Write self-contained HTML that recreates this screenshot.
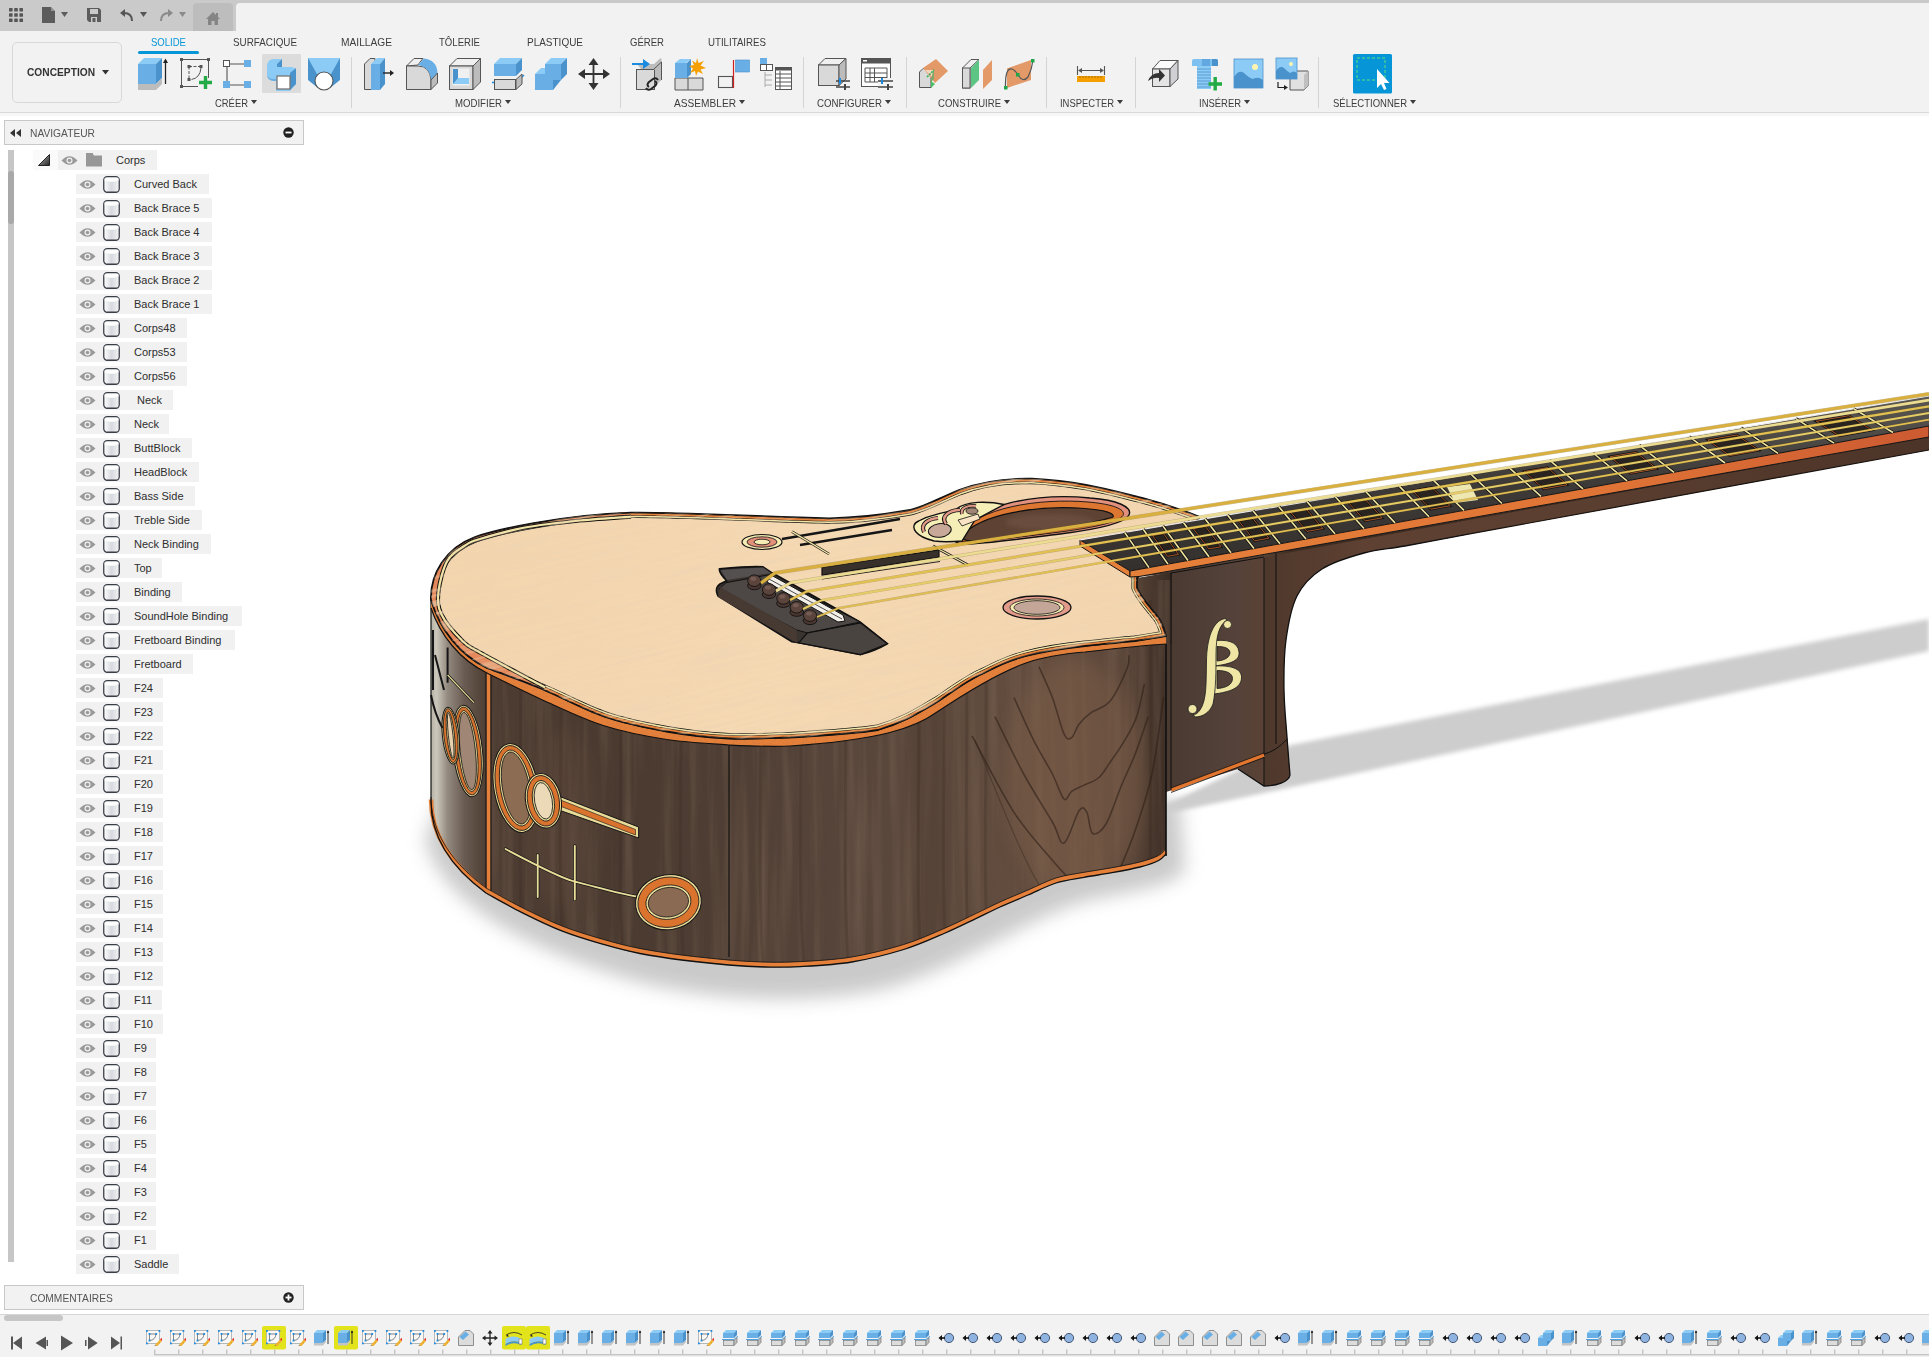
<!DOCTYPE html>
<html><head><meta charset="utf-8">
<style>
*{box-sizing:border-box}
html,body{margin:0;padding:0;width:1929px;height:1357px;overflow:hidden;background:#fff;font-family:"Liberation Sans",sans-serif;color:#333}
.abs{position:absolute}
#appbar{position:absolute;left:0;top:0;width:1929px;height:31px;background:#cacaca}
#hometab{position:absolute;left:193px;top:3px;width:40px;height:28px;background:#bdbdbd;border-radius:4px 4px 0 0}
#doctab{position:absolute;left:236px;top:3px;width:1693px;height:28px;background:#f2f2f2;border-radius:4px 0 0 0}
#toolbar{position:absolute;left:0;top:31px;width:1929px;height:82px;background:#f2f2f2;border-bottom:1px solid #d9d9d9}
#tbshade{position:absolute;left:0;top:113px;width:1929px;height:3px;background:#f6f6f6}
.tab{position:absolute;top:36px;font-size:11px;color:#3c3c3c;transform-origin:0 0;white-space:nowrap;letter-spacing:0}
.lbl{position:absolute;top:97px;font-size:11px;color:#3c3c3c;transform-origin:0 0;white-space:nowrap}
.sep{position:absolute;top:57px;width:1px;height:51px;background:#d4d4d4}
.arr{display:inline-block;width:0;height:0;border-left:3px solid transparent;border-right:3px solid transparent;border-top:4px solid #3c3c3c;vertical-align:2px;margin-left:3px}
#concept{position:absolute;left:12px;top:42px;width:110px;height:61px;border:1px solid #d8d8d8;border-radius:5px;background:#f2f2f2}
.panelhdr{position:absolute;left:4px;width:300px;height:25px;background:#f2f2f2;border:1px solid #c8c8c8}
.panelhdr span{position:absolute;left:25px;top:6px;font-size:11px;color:#555;transform-origin:0 0;transform:scaleX(0.93)}
.row{position:absolute;left:76px;height:20px}
.rbg{display:inline-block;height:20px;background:#f1f1f1;padding-right:11px;white-space:nowrap;position:relative}
.rbg .eye{position:absolute;left:3px;top:5px}
.rbg .bd{position:absolute;left:27px;top:2px}
.rt{display:inline-block;margin-left:58px;font-size:11px;line-height:20px;color:#2e2e2e}
#scroll{position:absolute;left:8px;top:150px;width:6px;height:1112px;background:#c6c6c6}
#thumb{position:absolute;left:8px;top:171px;width:6px;height:53px;background:#a9a9a9;border-radius:3px}
#tl{position:absolute;left:0;top:1314px;width:1929px;height:43px;background:#f2f2f2;border-top:1px solid #d6d6d6}
</style></head><body>
<svg width="0" height="0" style="position:absolute"><defs><linearGradient id="bg1" x1="0" x2="1"><stop offset="0" stop-color="#fff"/><stop offset="0.5" stop-color="#d6d9de"/><stop offset="1" stop-color="#f4f4f4"/></linearGradient></defs></svg>
<div id="appbar"></div>
<div id="hometab"></div>
<div id="doctab"></div>
<div id="toolbar"></div>
<div id="tbshade"></div>
<svg class="abs" style="left:0;top:0" width="240" height="31" viewBox="0 0 240 31"><rect x="9.0" y="8.0" width="3.6" height="3.6" rx="0.6" fill="#555"/><rect x="9.0" y="13.2" width="3.6" height="3.6" rx="0.6" fill="#555"/><rect x="9.0" y="18.4" width="3.6" height="3.6" rx="0.6" fill="#555"/><rect x="14.2" y="8.0" width="3.6" height="3.6" rx="0.6" fill="#555"/><rect x="14.2" y="13.2" width="3.6" height="3.6" rx="0.6" fill="#555"/><rect x="14.2" y="18.4" width="3.6" height="3.6" rx="0.6" fill="#555"/><rect x="19.4" y="8.0" width="3.6" height="3.6" rx="0.6" fill="#555"/><rect x="19.4" y="13.2" width="3.6" height="3.6" rx="0.6" fill="#555"/><rect x="19.4" y="18.4" width="3.6" height="3.6" rx="0.6" fill="#555"/><path d="M42 7 H51 L55 11 V23 H42Z" fill="#5c5c5c"/><path d="M51 7 V11 H55" fill="#cacaca" opacity="0.5"/><path d="M61 12 H68 L64.5 17Z" fill="#5c5c5c"/><path d="M87 8 H99 L101 10 V22 H89 L87 20Z" fill="#5c5c5c"/><rect x="90" y="9" width="8" height="5" fill="#cacaca"/><rect x="91" y="17" width="6" height="5" fill="#cacaca"/><rect x="92.5" y="18" width="3" height="4" fill="#5c5c5c"/><path d="M132 21 Q132 13 124 13 H122" stroke="#555" stroke-width="2" fill="none"/><path d="M120 13 L125 9 V17Z" fill="#555"/><path d="M140 12 H147 L143.5 17Z" fill="#555"/><path d="M161 21 Q161 13 169 13 H171" stroke="#8a8a8a" stroke-width="2" fill="none"/><path d="M173 13 L168 9 V17Z" fill="#8a8a8a"/><path d="M179 12 H186 L182.5 17Z" fill="#8a8a8a"/><path d="M206 19 L213 12 L220 19 H218 V25 H208 V19Z" fill="#858585"/><rect x="216" y="13" width="2" height="4" fill="#858585"/><rect x="211.5" y="21" width="3" height="4" fill="#bdbdbd"/></svg>
<div id="concept"></div>
<div class="abs" style="left:27px;top:65px;font-size:11.6px;font-weight:bold;color:#333;transform-origin:0 0;transform:scaleX(0.88);white-space:nowrap">CONCEPTION</div>
<svg class="abs" style="left:102px;top:70px" width="7" height="5"><path d="M0 0H7L3.5 4.5Z" fill="#333"/></svg>
<div class="tab" style="left:151px;color:#0696d7;transform:scaleX(0.867)">SOLIDE</div>
<div class="tab" style="left:233px;color:#3c3c3c;transform:scaleX(0.895)">SURFACIQUE</div>
<div class="tab" style="left:341px;color:#3c3c3c;transform:scaleX(0.927)">MAILLAGE</div>
<div class="tab" style="left:439px;color:#3c3c3c;transform:scaleX(0.871)">TÔLERIE</div>
<div class="tab" style="left:527px;color:#3c3c3c;transform:scaleX(0.907)">PLASTIQUE</div>
<div class="tab" style="left:630px;color:#3c3c3c;transform:scaleX(0.869)">GÉRER</div>
<div class="tab" style="left:708px;color:#3c3c3c;transform:scaleX(0.881)">UTILITAIRES</div>
<div class="abs" style="left:138px;top:51px;width:61px;height:3px;background:#0696d7;border-radius:1.5px"></div>
<div class="lbl" style="left:215px;transform:scaleX(0.857)">CRÉER</div>
<svg class="abs" style="left:251px;top:100px" width="7" height="5"><path d="M0 0H6L3 4Z" fill="#3c3c3c"/></svg>
<div class="lbl" style="left:455px;transform:scaleX(0.874)">MODIFIER</div>
<svg class="abs" style="left:505px;top:100px" width="7" height="5"><path d="M0 0H6L3 4Z" fill="#3c3c3c"/></svg>
<div class="lbl" style="left:674px;transform:scaleX(0.922)">ASSEMBLER</div>
<svg class="abs" style="left:739px;top:100px" width="7" height="5"><path d="M0 0H6L3 4Z" fill="#3c3c3c"/></svg>
<div class="lbl" style="left:817px;transform:scaleX(0.879)">CONFIGURER</div>
<svg class="abs" style="left:885px;top:100px" width="7" height="5"><path d="M0 0H6L3 4Z" fill="#3c3c3c"/></svg>
<div class="lbl" style="left:938px;transform:scaleX(0.866)">CONSTRUIRE</div>
<svg class="abs" style="left:1004px;top:100px" width="7" height="5"><path d="M0 0H6L3 4Z" fill="#3c3c3c"/></svg>
<div class="lbl" style="left:1060px;transform:scaleX(0.858)">INSPECTER</div>
<svg class="abs" style="left:1117px;top:100px" width="7" height="5"><path d="M0 0H6L3 4Z" fill="#3c3c3c"/></svg>
<div class="lbl" style="left:1199px;transform:scaleX(0.859)">INSÉRER</div>
<svg class="abs" style="left:1244px;top:100px" width="7" height="5"><path d="M0 0H6L3 4Z" fill="#3c3c3c"/></svg>
<div class="lbl" style="left:1333px;transform:scaleX(0.865)">SÉLECTIONNER</div>
<svg class="abs" style="left:1410px;top:100px" width="7" height="5"><path d="M0 0H6L3 4Z" fill="#3c3c3c"/></svg>
<div class="sep" style="left:351px"></div>
<div class="sep" style="left:620px"></div>
<div class="sep" style="left:803px"></div>
<div class="sep" style="left:906px"></div>
<div class="sep" style="left:1046px"></div>
<div class="sep" style="left:1135px"></div>
<div class="sep" style="left:1318px"></div>
<svg class="abs" style="left:0;top:0" width="1929" height="112" viewBox="0 0 1929 112"><g transform="translate(138,58)"><path d="M0 6 L6 0 H24 L18 6Z" fill="#8ccbf5"/><rect x="0" y="6" width="18" height="20" fill="#69afe5"/><path d="M18 6 L24 0 V20 L18 26Z" fill="#4a92cc"/><path d="M0 26 H18 L24 20 V26 L18 32 H0Z" fill="#bcbcbc"/><path d="M27.5 26 V2" stroke="#222" stroke-width="1.3"/><path d="M25 5 L27.5 0.5 L30 5Z" fill="#222"/></g><g transform="translate(180,58)"><path d="M1.5 1.5 H28.5 V20 M1.5 1.5 V28.5 H18" stroke="#555" stroke-width="1" fill="none"/><rect x="0" y="0" width="3" height="3" fill="#555"/><rect x="27" y="0" width="3" height="3" fill="#555"/><rect x="0" y="27" width="3" height="3" fill="#555"/><path d="M9 8.5 H20 M9 8.5 V21" stroke="#555" stroke-width="1" fill="none" stroke-dasharray="3 1.5"/><path d="M11.5 21.5 Q20 20 21 10" stroke="#555" stroke-width="1" fill="none"/><rect x="7.5" y="7" width="3" height="3" fill="#555"/><rect x="19.5" y="7" width="3" height="3" fill="#555"/><rect x="7.5" y="20" width="3" height="3" fill="#555"/><path d="M19 24.5 H32 M25.5 18 V31" stroke="#22aa44" stroke-width="3.4"/></g><g transform="translate(223,60)"><path d="M4 4 H25 M4 4 V25 H25" stroke="#555" stroke-width="1.1" fill="none"/><rect x="0.5" y="0.5" width="6" height="6" fill="#fff" stroke="#555"/><rect x="21" y="0" width="7" height="7" fill="#69afe5"/><rect x="0" y="21" width="7" height="7" fill="#69afe5"/><rect x="21" y="21" width="7" height="7" fill="#69afe5"/></g><g transform="translate(262,54)"><rect x="0" y="0" width="39" height="39" fill="#dcdcdc" rx="1"/><path d="M5 13 Q5 5 12 5 H20 L15 10 V13 H29 Q34 13 34 18 V30 L28 37 H14 V27 H12 Q5 27 5 20Z" fill="#8ccbf5"/><path d="M20 5 V13 H15 V10Z" fill="#4a92cc"/><path d="M28 19 L34 14 V30 L28 36Z" fill="#4a92cc"/><path d="M5 19 Q5 25 12 25 H14 V27 H12 Q5 27 5 20Z" fill="#4a92cc" opacity="0.5"/><rect x="15" y="22" width="13" height="13" fill="#fff" stroke="#777" stroke-width="1.3"/></g><g transform="translate(308,58)"><path d="M0 0 H32 V22 L22 30 H10 L0 22Z" fill="#4a92cc"/><path d="M0 0 H32 L22 18 H10Z" fill="#8ccbf5"/><circle cx="16" cy="23" r="9" fill="#fff" stroke="#555" stroke-width="1.1"/></g><g transform="translate(364,58)"><path d="M0.5 31.5 V6 L6 0.5 H11 V31.5Z" fill="#d9d9d9" stroke="#555" stroke-width="1"/><path d="M7 6 L13 0 H21 L16 6Z" fill="#8ccbf5"/><rect x="7" y="6" width="9" height="26" fill="#69afe5"/><path d="M16 6 L21 0 V26 L16 32Z" fill="#4a92cc"/><path d="M19 15 H27" stroke="#222" stroke-width="1.4"/><path d="M26 12 L30 15 L26 18Z" fill="#222"/></g><g transform="translate(406,58)"><path d="M0.5 31.5 V8 L8 0.5 H17 Q13 5 12 7 L0.5 8" fill="#f0f0f0" stroke="#555" stroke-width="1"/><path d="M0.5 8 H12 Q24 8 25 22 V31.5 H0.5Z" fill="#d9d9d9" stroke="#555" stroke-width="1"/><path d="M12 7 L18 0.5 Q31 2 31.5 15 L25 22 Q24 9 12 7Z" fill="#69afe5"/><path d="M25 22 L31.5 15 V25 L25 31.5Z" fill="#bcbcbc" stroke="#555" stroke-width="1"/></g><g transform="translate(449,58)"><path d="M0.5 8 L8 0.5 H31.5 L24 8Z" fill="#f0f0f0" stroke="#555" stroke-width="1"/><rect x="0.5" y="8" width="23.5" height="23.5" fill="#d9d9d9" stroke="#555" stroke-width="1"/><path d="M24 8 L31.5 0.5 V24 L24 31.5Z" fill="#bcbcbc" stroke="#555" stroke-width="1"/><rect x="3.5" y="10.5" width="17" height="17" fill="#f0f0f0"/><path d="M4 11 H9 V20 H20 V26 H4Z" fill="#4a92cc"/><path d="M9 20 H20 V26 H4Z" fill="#8ccbf5"/></g><g transform="translate(492,58)"><path d="M2 6 L8 0 H30 L24 6Z" fill="#8ccbf5"/><rect x="2" y="6" width="22" height="12" fill="#69afe5"/><path d="M24 6 L30 0 V12 L24 18Z" fill="#4a92cc"/><path d="M0 24.5 H24 L32 17" stroke="#1a8ae0" stroke-width="1.4" fill="none"/><rect x="2.5" y="21.5" width="21" height="10" fill="#d9d9d9" stroke="#555" stroke-width="1"/><path d="M24 21.5 L30 16 V26 L24 31.5Z" fill="#bcbcbc" stroke="#555" stroke-width="1"/></g><g transform="translate(535,58)"><path d="M10 6 L16 0 H32 L26 6Z" fill="#8ccbf5"/><rect x="10" y="6" width="16" height="16" fill="#69afe5"/><path d="M26 6 L32 0 V16 L26 22Z" fill="#4a92cc"/><path d="M0 16 L6 10 H10 V16Z" fill="#8ccbf5"/><rect x="0" y="16" width="18" height="16" fill="#69afe5"/><path d="M18 22 H26 L18 32Z" fill="#4a92cc"/></g><g transform="translate(578,58)"><path d="M15.5 4 V28 M4 16 H28" stroke="#333" stroke-width="1.8"/><path d="M15.5 0 L20.5 7 H10.5Z M15.5 32 L20.5 25 H10.5Z M0 16 L7 11 V21Z M32 16 L25 11 V21Z" fill="#333"/></g><g transform="translate(632,58)"><path d="M5 6 H22 L28 0.5 H29.5 V22 L23 28" fill="#bcbcbc"/><rect x="4.5" y="11.5" width="18" height="20" fill="#d9d9d9" stroke="#555" stroke-width="1"/><path d="M22 11 L29.5 4 V22" stroke="#555" fill="#bcbcbc" stroke-width="1"/><path d="M0 5 H11 V1 L18 6 L11 11 V7 H0Z" fill="#1b8be0"/><path d="M17 29 Q14 27 17 24 L21 21 Q24 19 26 22 M23 23 Q26 25 23 28 L19 31 Q16 33 14 30" stroke="#222" stroke-width="2" fill="none"/></g><g transform="translate(675,58)"><path d="M0 20 H28 V32 H0Z" fill="#d9d9d9" stroke="#555" stroke-width="1"/><path d="M13 20 V32" stroke="#555"/><path d="M0 5 L5 1 H16 L11 5Z" fill="#8ccbf5"/><rect x="0" y="5" width="12" height="15" fill="#69afe5"/><path d="M12 5 L16 1 V16 L12 20Z" fill="#4a92cc"/><path d="M22 0 L23.5 5 L29 3 L25.5 7.5 L31 10 L25.5 11.5 L28 16 L23 13.5 L21 18 L20 13 L15 15 L18 10.5 L14 8 L19 7 L17 2.5 L21 5Z" fill="#f5a000"/></g><g transform="translate(718,58)"><rect x="0.5" y="18.5" width="14" height="11" fill="none" stroke="#555" stroke-width="1.1"/><path d="M15.5 2 V30" stroke="#d02020" stroke-width="1.2"/><rect x="17.5" y="2" width="14" height="12" fill="#69afe5" stroke="#4a92cc" stroke-width="0.6"/></g><g transform="translate(760,58)"><rect x="0" y="0" width="7" height="7" fill="#69afe5"/><rect x="0.5" y="6.5" width="6" height="6" fill="#fff" stroke="#555" stroke-width="1"/><rect x="6.5" y="6.5" width="6" height="6" fill="#fff" stroke="#555" stroke-width="1"/><path d="M5 14 V29 M5 17 H12 M5 22 H12 M5 27 H12" stroke="#aaa" stroke-width="1"/><rect x="15.5" y="9.5" width="16" height="22" fill="#fff" stroke="#555" stroke-width="1"/><rect x="15.5" y="9.5" width="16" height="3" fill="#555"/><path d="M16 16 H31 M16 20 H31 M16 24 H31 M16 28 H31 M20 13 V31" stroke="#555" stroke-width="1"/></g><g transform="translate(818,58)"><path d="M0.5 7 L7 0.5 H28 L21 7Z" fill="#f0f0f0" stroke="#555" stroke-width="1"/><rect x="0.5" y="7" width="20.5" height="20.5" fill="#d9d9d9" stroke="#555" stroke-width="1"/><path d="M21 7 L28 0.5 V21 L21 27.5Z" fill="#bcbcbc" stroke="#555" stroke-width="1"/><path d="M18 23 H32 M18 29 H32" stroke="#444" stroke-width="1.6"/><rect x="21" y="20" width="2" height="6" fill="#1a8ae0"/><rect x="26" y="26" width="2" height="6" fill="#444"/></g><g transform="translate(861,58)"><rect x="0.5" y="0.5" width="29" height="28" fill="#fff" stroke="#555" stroke-width="1"/><rect x="0.5" y="0.5" width="29" height="5" fill="#555"/><rect x="2" y="2" width="4" height="1.5" fill="#fff"/><path d="M4 10 H26 V24 H4Z M4 15 H26 M4 19.5 H26 M9 10 V24 M13.5 10 V24" stroke="#555" stroke-width="1" fill="none"/><rect x="17" y="20" width="15" height="12" fill="#f2f2f2"/><path d="M17 23 H32 M17 29 H32" stroke="#444" stroke-width="1.6"/><rect x="20" y="20" width="2" height="6" fill="#1a8ae0"/><rect x="26" y="26" width="2" height="6" fill="#444"/></g><g transform="translate(919,59)"><path d="M0.5 28.5 V13 L4 9.5 H12 V28.5Z" fill="#d9d9d9" stroke="#555" stroke-width="1"/><path d="M4 9 L17 0 L29 12 L16 24Z" fill="#e39a68"/><path d="M6 11 H15 V20Z" fill="#f5d5bd"/><path d="M15 9 V20 L11 24" fill="#7aa86a"/><path d="M8 18 L15 11" stroke="#2cb35a" stroke-width="1.6" stroke-dasharray="2 1"/><path d="M12 22 L16 25 L12 29Z" fill="#4bbf6a"/></g><g transform="translate(962,59)"><path d="M0.5 29 V9 L9 0.5 H17 L8 9 V29Z" fill="#f0f0f0" stroke="#555" stroke-width="1"/><rect x="0.5" y="9" width="7.5" height="20" fill="#d9d9d9" stroke="#555" stroke-width="1"/><path d="M9 9 L17 0.5 V21 L9 29Z" fill="#5dc583"/><path d="M21 11 L30 1 V21 L21 30Z" fill="#e39a68"/></g><g transform="translate(1004,59)"><path d="M3 9.5 L27 1 V21 L3 29Z" fill="#e39a68"/><path d="M1.5 29 Q1 8 8 10 Q11 11 14 16 Q19 24 24 18 Q28 10 29 1" stroke="#555" stroke-width="1.2" fill="none"/><rect x="0" y="27" width="3.5" height="3.5" fill="#1ea84a"/><rect x="12" y="14" width="3.5" height="3.5" fill="#1ea84a"/><rect x="27" y="0" width="3.5" height="3.5" fill="#1ea84a"/></g><g transform="translate(1077,66)"><path d="M0.5 0 V9 M27.5 0 V9 M2 4.5 H26" stroke="#555" stroke-width="1.1"/><path d="M1 4.5 L5 2 V7Z M27 4.5 L23 2 V7Z" fill="#555"/><rect x="0" y="10" width="28" height="6" fill="#f5a000"/><path d="M3 10 V12 M6 10 V12 M9 10 V12 M12 10 V12 M15 10 V12 M18 10 V12 M21 10 V12 M24 10 V12" stroke="#7a5000" stroke-width="0.6"/></g><g transform="translate(1148,60)"><path d="M4.5 9 L12 0.5 H30 L22 9Z" fill="#fafafa" stroke="#555" stroke-width="1"/><rect x="4.5" y="9" width="17.5" height="17.5" fill="#e4e4e4" stroke="#555" stroke-width="1"/><path d="M22 9 L30 0.5 V19 L22 26.5Z" fill="#cfcfd4" stroke="#555" stroke-width="1"/><path d="M0 21 Q3 13 11 13 V9 L17 15.5 L11 22 V18 Q5 17 0 21Z" fill="#333"/></g><g transform="translate(1192,59)"><path d="M0 2 Q0 0 2 0 H24 Q26 0 26 2 V7 H0Z" fill="#7ec0f0"/><path d="M10 0 H18 V7 H10Z" fill="#62a8e0"/><path d="M20 0 H24 Q26 0 26 2 V7 H20Z" fill="#4a92cc"/><rect x="5" y="7" width="14" height="23" fill="#8ccbf5"/><path d="M5 10 H19 M5 13 H19 M5 16 H19 M5 19 H19 M5 22 H19 M5 25 H19 M5 28 H19" stroke="#4a92cc" stroke-width="0.8"/><path d="M16.5 25 H30 M23.2 18 V31.5" stroke="#22aa44" stroke-width="3.4"/></g><g transform="translate(1234,59)"><rect x="0" y="0" width="29" height="29" fill="#8ccbf5" stroke="#4a92cc" stroke-width="0.8"/><path d="M0 29 V18 Q5 10 10 14 Q15 19 19 20 Q24 17 29 21 V29Z" fill="#4a92cc"/><circle cx="21" cy="8" r="3" fill="#fff5b0"/></g><g transform="translate(1276,58)"><path d="M14 17 L18 13 H32 V28 L28 32 H14Z" fill="#e0e0e0" stroke="#555" stroke-width="1"/><path d="M28 17 L32 13 V28 L28 32Z" fill="#c0c0c0"/><rect x="0" y="0" width="21" height="21" fill="#8ccbf5" stroke="#4a92cc" stroke-width="0.8"/><path d="M0 21 V13 Q4 7 8 10 Q12 14 14 15 Q18 12 21 15 V21Z" fill="#4a92cc"/><circle cx="15" cy="6" r="2" fill="#fff5b0"/><path d="M2 24 V29.5 H9" stroke="#222" stroke-width="1.2" fill="none"/><path d="M8 27 L12 29.5 L8 32Z" fill="#222"/></g><g transform="translate(1353,54)"><rect x="0" y="0" width="39" height="39.5" rx="1.5" fill="#0696d7"/><rect x="4" y="4" width="28" height="22" fill="none" stroke="#5fe07a" stroke-width="1" stroke-dasharray="3 2"/><path d="M24 15 V34 L28 30 L31 36 L33.5 35 L31 29 L36.5 29Z" fill="#fff"/></g></svg>
<svg class="abs" style="left:0;top:0" width="1929" height="1357" viewBox="0 0 1929 1357">
<defs>
<filter id="blur8" x="-20%" y="-20%" width="140%" height="140%"><feGaussianBlur stdDeviation="9"/></filter>
<filter id="blur3" x="-10%" y="-50%" width="120%" height="200%"><feGaussianBlur stdDeviation="2.2"/></filter>
<linearGradient id="sideG" x1="486" y1="0" x2="1170" y2="0" gradientUnits="userSpaceOnUse">
 <stop offset="0" stop-color="#4d3c32"/><stop offset="0.2" stop-color="#4a3a30"/><stop offset="0.35" stop-color="#4f3e34"/>
 <stop offset="0.5" stop-color="#56443a"/><stop offset="0.7" stop-color="#5f4b3e"/><stop offset="0.85" stop-color="#654e40"/><stop offset="0.95" stop-color="#574337"/><stop offset="1" stop-color="#3a2c24"/>
</linearGradient>
<linearGradient id="buttG" x1="431" y1="0" x2="486" y2="0" gradientUnits="userSpaceOnUse">
 <stop offset="0" stop-color="#b8b2a6"/><stop offset="0.1" stop-color="#cbc7bb"/><stop offset="0.3" stop-color="#948a80"/><stop offset="0.6" stop-color="#6a5c52"/><stop offset="1" stop-color="#4e3e34"/>
</linearGradient>
<linearGradient id="topG" x1="431" y1="480" x2="1160" y2="740" gradientUnits="userSpaceOnUse">
 <stop offset="0" stop-color="#f3d5ad"/><stop offset="0.5" stop-color="#f5d9b3"/><stop offset="1" stop-color="#f3d6af"/>
</linearGradient>
<linearGradient id="heelG" x1="1171" y1="0" x2="1290" y2="0" gradientUnits="userSpaceOnUse">
 <stop offset="0" stop-color="#4a3a31"/><stop offset="0.5" stop-color="#54423a"/><stop offset="0.8" stop-color="#5a4234"/><stop offset="1" stop-color="#3e2c22"/>
</linearGradient>
<linearGradient id="bindG" x1="1130" y1="0" x2="1929" y2="0" gradientUnits="userSpaceOnUse"><stop offset="0" stop-color="#e5803a"/><stop offset="0.6" stop-color="#e07436"/><stop offset="1" stop-color="#cc5a32"/></linearGradient>
<linearGradient id="fbG" x1="0" y1="0" x2="0" y2="1">
 <stop offset="0" stop-color="#5a5652"/><stop offset="0.5" stop-color="#3e3a37"/><stop offset="1" stop-color="#34302d"/>
</linearGradient>
</defs>
<path d="M425 840 C440 900 520 950 650 985 C720 1000 800 1005 880 990 C960 970 1030 915 1090 900 C1140 890 1175 885 1185 870 L1180 800 L440 800Z" fill="#c8c8c8" filter="url(#blur8)" opacity="0.95"/>
<path d="M1150 812 L1291 745 L1929 619 L1929 651 L1170 813Z" fill="#cdcdcd" filter="url(#blur3)"/>
<path d="M1139 576.5 L1929 437 L1929 450 L1467 534.4 C1456.7 536.3 1422.2 542.9 1405.0 546.0 C1387.8 549.1 1377.8 549.2 1364.0 553.0 C1350.2 556.8 1333.2 561.8 1322.0 569.0 C1310.8 576.2 1303.0 584.2 1297.0 596.0 C1291.0 607.8 1288.2 624.3 1286.0 640.0 C1283.8 655.7 1283.8 673.8 1284.0 690.0 C1284.2 706.2 1286.0 722.8 1287.0 737.0 C1288.0 751.2 1289.5 768.7 1290.0 775.0 C1289 782 1276 786 1264 786 L1238 769 L1166 792 L1166 574Z" fill="url(#heelG)"/>
<linearGradient id="neckG" x1="1264" y1="0" x2="1929" y2="0" gradientUnits="userSpaceOnUse"><stop offset="0" stop-color="#4e382c"/><stop offset="0.15" stop-color="#5e4132"/><stop offset="0.5" stop-color="#5a3e30"/><stop offset="1" stop-color="#4c3428"/></linearGradient>
<path d="M1264 557 L1929 437 L1929 450 L1467 534.4 C1456.7 536.3 1422.2 542.9 1405.0 546.0 C1387.8 549.1 1377.8 549.2 1364.0 553.0 C1350.2 556.8 1333.2 561.8 1322.0 569.0 C1310.8 576.2 1303.0 584.2 1297.0 596.0 C1291.0 607.8 1288.2 624.3 1286.0 640.0 C1283.8 655.7 1283.8 673.8 1284.0 690.0 C1284.2 706.2 1286.0 722.8 1287.0 737.0 C1288.0 751.2 1289.5 768.7 1290.0 775.0 C1289 782 1276 786 1264 786Z" fill="url(#neckG)"/>
<path d="M1467 534.4 L1929 450" stroke="#1a1410" stroke-width="1.2" fill="none"/>
<path d="M1467 534.4 C1456.7 536.3 1422.2 542.9 1405.0 546.0 C1387.8 549.1 1377.8 549.2 1364.0 553.0 C1350.2 556.8 1333.2 561.8 1322.0 569.0 C1310.8 576.2 1303.0 584.2 1297.0 596.0 C1291.0 607.8 1288.2 624.3 1286.0 640.0 C1283.8 655.7 1283.8 673.8 1284.0 690.0 C1284.2 706.2 1286.0 722.8 1287.0 737.0 C1288.0 751.2 1289.5 768.7 1290.0 775.0 C1289 782 1276 786 1264 786 L1238 769" stroke="#111" stroke-width="1.3" fill="none"/>
<path d="M1264 558 L1264 786 M1276 553 V744 M1264 754 C1272 752 1280 747 1287 739" stroke="#111" stroke-width="1" fill="none"/>
<path d="M1171 790 L1264 755" stroke="#e2762e" stroke-width="4" fill="none"/><path d="M1171 792.5 L1264 757.5 M1171 788 L1264 753" stroke="#111" stroke-width="0.8" fill="none"/>
<path d="M431 600 L431 802 C431 830 444 862 486 893 C491.9 896.2 508.7 905.9 521.5 912.3 C534.3 918.7 549.2 926.0 563.0 931.4 C576.8 936.8 591.6 941.0 604.4 944.7 C617.2 948.4 627.1 951.0 640.0 953.5 C652.9 956.0 666.7 958.1 681.5 960.0 C696.3 961.9 715.0 963.8 728.7 965.0 C742.5 966.2 752.1 966.7 764.0 967.0 C775.9 967.3 785.4 967.4 800.0 966.6 C814.6 965.8 834.5 964.9 851.8 962.0 C869.1 959.1 888.1 954.3 903.7 949.5 C919.3 944.7 933.1 938.2 945.2 933.0 C957.3 927.8 967.2 922.7 976.3 918.4 C985.4 914.1 991.4 910.9 1000.0 907.0 C1008.6 903.1 1018.7 899.0 1028.0 895.0 C1037.3 891.0 1046.7 886.0 1056.0 883.0 C1065.3 880.0 1074.7 879.0 1084.0 877.3 C1093.3 875.6 1102.7 874.4 1112.0 872.7 C1121.3 871.0 1132.2 869.0 1140.0 867.0 C1147.8 865.0 1154.3 862.7 1158.6 860.5 C1162.9 858.3 1164.8 855.1 1166.0 854.0 L1166 644 L1172 644 L1172 572 L1137 578 L1200 517 C1170 505 1150 500 1141 497.6 C1110 490 1080 481 1032 478.7 C1000 478 975 484 959 490 C935 500 920 509 907 510.5 C870 517 850 518 829.6 518.3 C740 516 680 512 631 512.6 C560 515 495 530 475 537 C445 548 430 575 431 600 Z" fill="url(#sideG)"/>
<clipPath id="sideclip"><path d="M431 600 L431 802 C431 830 444 862 486 893 C491.9 896.2 508.7 905.9 521.5 912.3 C534.3 918.7 549.2 926.0 563.0 931.4 C576.8 936.8 591.6 941.0 604.4 944.7 C617.2 948.4 627.1 951.0 640.0 953.5 C652.9 956.0 666.7 958.1 681.5 960.0 C696.3 961.9 715.0 963.8 728.7 965.0 C742.5 966.2 752.1 966.7 764.0 967.0 C775.9 967.3 785.4 967.4 800.0 966.6 C814.6 965.8 834.5 964.9 851.8 962.0 C869.1 959.1 888.1 954.3 903.7 949.5 C919.3 944.7 933.1 938.2 945.2 933.0 C957.3 927.8 967.2 922.7 976.3 918.4 C985.4 914.1 991.4 910.9 1000.0 907.0 C1008.6 903.1 1018.7 899.0 1028.0 895.0 C1037.3 891.0 1046.7 886.0 1056.0 883.0 C1065.3 880.0 1074.7 879.0 1084.0 877.3 C1093.3 875.6 1102.7 874.4 1112.0 872.7 C1121.3 871.0 1132.2 869.0 1140.0 867.0 C1147.8 865.0 1154.3 862.7 1158.6 860.5 C1162.9 858.3 1164.8 855.1 1166.0 854.0 L1166 644 L1172 644 L1172 572 L1137 578 L1200 517 C1170 505 1150 500 1141 497.6 C1110 490 1080 481 1032 478.7 C1000 478 975 484 959 490 C935 500 920 509 907 510.5 C870 517 850 518 829.6 518.3 C740 516 680 512 631 512.6 C560 515 495 530 475 537 C445 548 430 575 431 600 Z"/></clipPath>
<filter id="streakF" x="0" y="0" width="100%" height="100%"><feTurbulence type="fractalNoise" baseFrequency="0.09 0.004" numOctaves="3" seed="7"/><feColorMatrix type="matrix" values="0 0 0 0 0.20  0 0 0 0 0.13  0 0 0 0 0.09  -2.2 0 0 0 1.25"/></filter>
<g clip-path="url(#sideclip)"><rect x="425" y="580" width="750" height="400" filter="url(#streakF)" opacity="0.5"/><ellipse cx="1075" cy="780" rx="70" ry="120" fill="#80604a" opacity="0.45" filter="url(#blur8)"/><ellipse cx="560" cy="820" rx="40" ry="90" fill="#5e4a3e" opacity="0.4" filter="url(#blur8)"/><path d="M918 600 C921 760 915 860 921 965" stroke="#33241b" stroke-width="3" fill="none" opacity="0.25"/><path d="M943 600 C947 760 939 860 947 965" stroke="#33241b" stroke-width="3" fill="none" opacity="0.20"/><path d="M966 600 C969 760 963 860 969 965" stroke="#33241b" stroke-width="3" fill="none" opacity="0.25"/><path d="M985 600 C989 760 981 860 989 965" stroke="#33241b" stroke-width="3" fill="none" opacity="0.20"/><path d="M760 600 C763 760 757 860 763 965" stroke="#33241b" stroke-width="3" fill="none" opacity="0.20"/><path d="M800 600 C804 760 796 860 804 965" stroke="#33241b" stroke-width="3" fill="none" opacity="0.18"/><path d="M845 600 C848 760 842 860 848 965" stroke="#33241b" stroke-width="3" fill="none" opacity="0.20"/><path d="M620 600 C623 760 617 860 623 965" stroke="#33241b" stroke-width="3" fill="none" opacity="0.18"/><path d="M560 600 C564 760 556 860 564 965" stroke="#33241b" stroke-width="3" fill="none" opacity="0.20"/><path d="M520 600 C523 760 517 860 523 965" stroke="#33241b" stroke-width="3" fill="none" opacity="0.18"/><path d="M680 600 C684 760 676 860 684 965" stroke="#33241b" stroke-width="3" fill="none" opacity="0.18"/><path d="M1150 600 C1153 760 1147 860 1153 965" stroke="#33241b" stroke-width="3" fill="none" opacity="0.25"/><path d="M1039.0 666.8 C1041.2 671.9 1048.2 686.3 1052.4 697.5 C1056.6 708.7 1060.8 727.2 1064.0 733.9 C1067.2 740.6 1069.1 739.3 1071.6 737.7 C1074.1 736.1 1075.8 728.4 1079.0 724.3 C1082.2 720.1 1085.5 716.6 1090.7 712.8 C1095.9 709.0 1103.9 708.6 1109.9 701.3 C1116.0 693.9 1123.8 676.4 1127.0 668.7 C1130.2 661.0 1128.7 657.5 1129.0 655.3" stroke="#2e2018" stroke-width="1.6" fill="none" opacity="0.6"/><path d="M1014.0 697.5 C1017.2 704.5 1026.9 726.9 1033.3 739.6 C1039.7 752.4 1047.3 764.1 1052.4 774.0 C1057.5 783.9 1060.8 796.1 1064.0 799.0 C1067.2 801.9 1068.4 793.5 1071.6 791.3 C1074.8 789.1 1078.5 787.8 1083.0 785.6 C1087.5 783.4 1093.9 781.8 1098.4 778.0 C1102.9 774.2 1105.4 769.0 1109.9 762.6 C1114.4 756.2 1120.7 747.3 1125.2 739.6 C1129.7 731.9 1133.5 725.9 1136.7 716.6 C1139.9 707.3 1143.1 689.4 1144.4 684.0" stroke="#2e2018" stroke-width="1.6" fill="none" opacity="0.6"/><path d="M995.0 716.6 C999.8 726.2 1014.1 756.4 1023.7 774.0 C1033.3 791.6 1045.7 810.5 1052.4 822.0 C1059.1 833.5 1059.5 844.9 1064.0 843.0 C1068.5 841.1 1075.4 815.6 1079.2 810.5 C1083.0 805.4 1084.7 808.6 1086.9 812.4 C1089.1 816.2 1089.4 831.6 1092.6 833.5 C1095.8 835.4 1101.2 832.0 1106.0 824.0 C1110.8 816.0 1116.6 797.1 1121.4 785.6 C1126.2 774.1 1130.3 766.5 1134.8 755.0 C1139.3 743.5 1146.0 723.0 1148.2 716.6" stroke="#2e2018" stroke-width="1.6" fill="none" opacity="0.6"/><path d="M972.0 735.8 C979.0 748.6 1000.6 791.6 1014.0 812.4 C1027.4 833.1 1042.8 848.8 1052.4 860.3 C1062.0 871.8 1068.4 877.9 1071.6 881.4" stroke="#2e2018" stroke-width="1.6" fill="none" opacity="0.6"/><path d="M1163.5 697.5 C1161.6 710.2 1156.8 751.6 1152.0 774.0 C1147.2 796.4 1140.2 815.6 1134.8 831.6 C1129.4 847.6 1122.0 863.6 1119.5 870.0" stroke="#2e2018" stroke-width="1.6" fill="none" opacity="0.6"/><path d="M975 740 C1000 800 1030 880 1050 900" stroke="#33241b" stroke-width="1.2" fill="none" opacity="0.4"/><rect x="912" y="650" width="34" height="320" fill="#3a2a20" opacity="0.18" filter="url(#blur8)"/></g>
<path d="M431 596 L431 802 C431 830 444 862 486 893 L486 668 C460 650 440 625 431 596Z" fill="url(#buttG)"/>
<ellipse cx="516" cy="788" rx="22" ry="45" fill="#e8dc98" stroke="#161616" stroke-width="1" transform="rotate(-10 516 788)"/><ellipse cx="516" cy="788" rx="20.0" ry="43.0" fill="#d9732e" stroke="#161616" stroke-width="0.8" transform="rotate(-10 516 788)"/><ellipse cx="516" cy="788" rx="15.5" ry="38.5" fill="#e8dc98" stroke="#161616" stroke-width="0.8" transform="rotate(-10 516 788)"/><ellipse cx="516" cy="788" rx="13.5" ry="36.5" fill="#8c6c52" stroke="#161616" stroke-width="0.8" transform="rotate(-10 516 788)"/>
<path d="M556 795 L638.6 827 L638.6 838 L553 808Z" fill="#e8dc98" stroke="#161616" stroke-width="1"/><path d="M558 799 L635.5 829.5 L635.5 835 L556 804.5Z" fill="#d9732e" stroke="#161616" stroke-width="0.6"/>
<ellipse cx="543.4" cy="800.8" rx="17.8" ry="27.5" fill="#e8dc98" stroke="#161616" stroke-width="1" transform="rotate(-10 543.4 800.8)"/><ellipse cx="543.4" cy="800.8" rx="15.8" ry="25.5" fill="#d9732e" stroke="#161616" stroke-width="0.8" transform="rotate(-10 543.4 800.8)"/><ellipse cx="543.4" cy="800.8" rx="10.8" ry="20.5" fill="#e8dc98" stroke="#161616" stroke-width="0.8" transform="rotate(-10 543.4 800.8)"/><ellipse cx="543.4" cy="800.8" rx="8.8" ry="18.5" fill="#ecd9b8" stroke="#161616" stroke-width="0.8" transform="rotate(-10 543.4 800.8)"/>
<path d="M505.5 849 C530 862 560 878 575 881.7 C600 888 620 894 636 896.4 M537.7 855 V897 M574.8 846 V899.5" stroke="#161616" stroke-width="3.4" fill="none" stroke-linecap="round"/><path d="M505.5 849 C530 862 560 878 575 881.7 C600 888 620 894 636 896.4 M537.7 855 V897 M574.8 846 V899.5" stroke="#e8dc98" stroke-width="1.9" fill="none" stroke-linecap="round"/>
<ellipse cx="668.4" cy="902.2" rx="33" ry="27.5" fill="#e8dc98" stroke="#161616" stroke-width="1" transform="rotate(-8 668.4 902.2)"/><ellipse cx="668.4" cy="902.2" rx="30.6" ry="25.1" fill="#d9732e" stroke="#161616" stroke-width="0.8" transform="rotate(-8 668.4 902.2)"/><ellipse cx="668.4" cy="902.2" rx="22.6" ry="17.1" fill="#e8dc98" stroke="#161616" stroke-width="0.8" transform="rotate(-8 668.4 902.2)"/><ellipse cx="668.4" cy="902.2" rx="20.2" ry="14.7" fill="#8a6a52" stroke="#161616" stroke-width="0.8" transform="rotate(-8 668.4 902.2)"/>
<ellipse cx="467.8" cy="751" rx="14.7" ry="46" fill="#e8dc98" stroke="#161616" stroke-width="1" transform="rotate(-6 467.8 751)"/><ellipse cx="467.8" cy="751" rx="12.899999999999999" ry="44.2" fill="#d9732e" stroke="#161616" stroke-width="0.8" transform="rotate(-6 467.8 751)"/><ellipse cx="467.8" cy="751" rx="9.399999999999999" ry="40.7" fill="#e8dc98" stroke="#161616" stroke-width="0.8" transform="rotate(-6 467.8 751)"/><ellipse cx="467.8" cy="751" rx="7.6" ry="38.9" fill="#a08674" stroke="#161616" stroke-width="0.8" transform="rotate(-6 467.8 751)"/>
<ellipse cx="450.7" cy="735.6" rx="8.3" ry="28.6" fill="#e8dc98" stroke="#161616" stroke-width="1" transform="rotate(-6 450.7 735.6)"/><ellipse cx="450.7" cy="735.6" rx="6.800000000000001" ry="27.1" fill="#d9732e" stroke="#161616" stroke-width="0.8" transform="rotate(-6 450.7 735.6)"/><ellipse cx="450.7" cy="735.6" rx="3.8000000000000007" ry="24.1" fill="#e8dc98" stroke="#161616" stroke-width="0.8" transform="rotate(-6 450.7 735.6)"/><ellipse cx="450.7" cy="735.6" rx="2.3000000000000007" ry="22.6" fill="#e8d2b0" stroke="#161616" stroke-width="0.8" transform="rotate(-6 450.7 735.6)"/>
<path d="M433 630 V690 M435 655 L444 690 M447.6 647.6 V682.7 M431 695 C434 710 438 720 442.5 728" stroke="#161616" stroke-width="2" fill="none"/>
<path d="M447.6 675 L473.9 702.7" stroke="#161616" stroke-width="2.6" fill="none"/><path d="M447.6 675 L473.9 702.7" stroke="#e8dc98" stroke-width="1.2" fill="none"/>
<path d="M488.5 668 V893" stroke="#e5803a" stroke-width="4"/><path d="M486 668 V893 M491 670 V895" stroke="#111" stroke-width="1"/>
<path d="M729 745 V957" stroke="#111" stroke-width="1.2"/>
<path d="M431 802 C431 830 444 862 486 893 C491.9 896.2 508.7 905.9 521.5 912.3 C534.3 918.7 549.2 926.0 563.0 931.4 C576.8 936.8 591.6 941.0 604.4 944.7 C617.2 948.4 627.1 951.0 640.0 953.5 C652.9 956.0 666.7 958.1 681.5 960.0 C696.3 961.9 715.0 963.8 728.7 965.0 C742.5 966.2 752.1 966.7 764.0 967.0 C775.9 967.3 785.4 967.4 800.0 966.6 C814.6 965.8 834.5 964.9 851.8 962.0 C869.1 959.1 888.1 954.3 903.7 949.5 C919.3 944.7 933.1 938.2 945.2 933.0 C957.3 927.8 967.2 922.7 976.3 918.4 C985.4 914.1 991.4 910.9 1000.0 907.0 C1008.6 903.1 1018.7 899.0 1028.0 895.0 C1037.3 891.0 1046.7 886.0 1056.0 883.0 C1065.3 880.0 1074.7 879.0 1084.0 877.3 C1093.3 875.6 1102.7 874.4 1112.0 872.7 C1121.3 871.0 1132.2 869.0 1140.0 867.0 C1147.8 865.0 1154.3 862.7 1158.6 860.5 C1162.9 858.3 1164.8 855.1 1166.0 854.0" stroke="#e5803a" stroke-width="4.5" fill="none" transform="translate(0,-2.5)"/>
<path d="M431 802 C431 830 444 862 486 893 C491.9 896.2 508.7 905.9 521.5 912.3 C534.3 918.7 549.2 926.0 563.0 931.4 C576.8 936.8 591.6 941.0 604.4 944.7 C617.2 948.4 627.1 951.0 640.0 953.5 C652.9 956.0 666.7 958.1 681.5 960.0 C696.3 961.9 715.0 963.8 728.7 965.0 C742.5 966.2 752.1 966.7 764.0 967.0 C775.9 967.3 785.4 967.4 800.0 966.6 C814.6 965.8 834.5 964.9 851.8 962.0 C869.1 959.1 888.1 954.3 903.7 949.5 C919.3 944.7 933.1 938.2 945.2 933.0 C957.3 927.8 967.2 922.7 976.3 918.4 C985.4 914.1 991.4 910.9 1000.0 907.0 C1008.6 903.1 1018.7 899.0 1028.0 895.0 C1037.3 891.0 1046.7 886.0 1056.0 883.0 C1065.3 880.0 1074.7 879.0 1084.0 877.3 C1093.3 875.6 1102.7 874.4 1112.0 872.7 C1121.3 871.0 1132.2 869.0 1140.0 867.0 C1147.8 865.0 1154.3 862.7 1158.6 860.5 C1162.9 858.3 1164.8 855.1 1166.0 854.0" stroke="#111" stroke-width="1.3" fill="none"/>
<path d="M431 802 C431 830 444 862 486 893 C491.9 896.2 508.7 905.9 521.5 912.3 C534.3 918.7 549.2 926.0 563.0 931.4 C576.8 936.8 591.6 941.0 604.4 944.7 C617.2 948.4 627.1 951.0 640.0 953.5 C652.9 956.0 666.7 958.1 681.5 960.0 C696.3 961.9 715.0 963.8 728.7 965.0 C742.5 966.2 752.1 966.7 764.0 967.0 C775.9 967.3 785.4 967.4 800.0 966.6 C814.6 965.8 834.5 964.9 851.8 962.0 C869.1 959.1 888.1 954.3 903.7 949.5 C919.3 944.7 933.1 938.2 945.2 933.0 C957.3 927.8 967.2 922.7 976.3 918.4 C985.4 914.1 991.4 910.9 1000.0 907.0 C1008.6 903.1 1018.7 899.0 1028.0 895.0 C1037.3 891.0 1046.7 886.0 1056.0 883.0 C1065.3 880.0 1074.7 879.0 1084.0 877.3 C1093.3 875.6 1102.7 874.4 1112.0 872.7 C1121.3 871.0 1132.2 869.0 1140.0 867.0 C1147.8 865.0 1154.3 862.7 1158.6 860.5 C1162.9 858.3 1164.8 855.1 1166.0 854.0" stroke="#111" stroke-width="0.8" fill="none" transform="translate(0,-5)"/>
<path d="M431 596 L431 802 M1166 644 V856" stroke="#111" stroke-width="1.2" fill="none"/>
<path d="M431 598 C440 630 460 655 487 668 C496.2 671.5 522.5 680.9 542.0 689.0 C561.5 697.1 583.2 709.4 604.0 716.5 C624.8 723.6 645.8 727.8 666.6 731.5 C687.4 735.2 708.4 737.5 729.0 738.5 C749.6 739.5 779.8 737.7 790.0 737.5 C830 735 860 733 878 730 C905 722 920 712 937 702 C955 690 968 680 982 674 C998 666 1010 660 1026 656 C1045 651 1065 648 1085 646 C1105 644 1120 642 1135 641 C1150 639 1158 637 1166 636 L1166 644 C1150 645 1120 648 1085 652 C1060 654 1040 658 1026 663 C1000 672 970 690 937 712 C915 728 880 740 790 746 C770 747 750 746 729 745 C718.6 744.1 687.4 742.7 666.6 739.5 C645.8 736.3 624.8 732.4 604.0 725.8 C583.2 719.2 561.5 708.5 542.0 699.7 C522.5 690.9 496.2 677.5 487.0 673.0 C460 660 440 635 431 608 Z" fill="#e5803a"/>
<filter id="speckF" x="0" y="0" width="100%" height="100%"><feTurbulence type="fractalNoise" baseFrequency="0.9" numOctaves="1" seed="11"/><feColorMatrix type="matrix" values="0 0 0 0 0.5  0 0 0 0 0.18  0 0 0 0 0.06  0 -7 0 0 3.0"/></filter>
<clipPath id="bindclip"><path d="M431 598 C440 630 460 655 487 668 C496.2 671.5 522.5 680.9 542.0 689.0 C561.5 697.1 583.2 709.4 604.0 716.5 C624.8 723.6 645.8 727.8 666.6 731.5 C687.4 735.2 708.4 737.5 729.0 738.5 C749.6 739.5 779.8 737.7 790.0 737.5 C830 735 860 733 878 730 C905 722 920 712 937 702 C955 690 968 680 982 674 C998 666 1010 660 1026 656 C1045 651 1065 648 1085 646 C1105 644 1120 642 1135 641 C1150 639 1158 637 1166 636 L1166 644 C1150 645 1120 648 1085 652 C1060 654 1040 658 1026 663 C1000 672 970 690 937 712 C915 728 880 740 790 746 C770 747 750 746 729 745 C718.6 744.1 687.4 742.7 666.6 739.5 C645.8 736.3 624.8 732.4 604.0 725.8 C583.2 719.2 561.5 708.5 542.0 699.7 C522.5 690.9 496.2 677.5 487.0 673.0 C460 660 440 635 431 608 Z"/></clipPath>
<g clip-path="url(#bindclip)"><rect x="425" y="590" width="750" height="170" filter="url(#speckF)" opacity="0.55"/></g>
<path d="M431 598 C440 630 460 655 487 668 C496.2 671.5 522.5 680.9 542.0 689.0 C561.5 697.1 583.2 709.4 604.0 716.5 C624.8 723.6 645.8 727.8 666.6 731.5 C687.4 735.2 708.4 737.5 729.0 738.5 C749.6 739.5 779.8 737.7 790.0 737.5 C830 735 860 733 878 730 C905 722 920 712 937 702 C955 690 968 680 982 674 C998 666 1010 660 1026 656 C1045 651 1065 648 1085 646 C1105 644 1120 642 1135 641 C1150 639 1158 637 1166 636" stroke="#111" stroke-width="1.2" fill="none"/>
<path d="M1166 644 C1150 645 1120 648 1085 652 C1060 654 1040 658 1026 663 C1000 672 970 690 937 712 C915 728 880 740 790 746 C770 747 750 746 729 745 C718.6 744.1 687.4 742.7 666.6 739.5 C645.8 736.3 624.8 732.4 604.0 725.8 C583.2 719.2 561.5 708.5 542.0 699.7 C522.5 690.9 496.2 677.5 487.0 673.0 C460 660 440 635 431 608" stroke="#111" stroke-width="1.2" fill="none"/>
<path d="M431 600 C430 575 445 548 475 537 C495 530 560 515 631 512.6 C680 512 740 516 829.6 518.3 C850 518 870 517 907 510.5 C920 509 935 500 959 490 C975 484 1000 478 1032 478.7 C1080 481 1110 490 1141 497.6 C1150 500 1170 505 1200 517 L1137 578 L1137 588 C1142 600 1155 612 1160 620 C1163 626 1165 632 1166 636 C1158 637 1150 639 1135 641 C1120 642 1105 644 1085 646 C1065 648 1045 651 1026 656 C1010 660 998 666 982 674 C968 680 955 690 937 702 C920 712 905 722 878 730 C860 733 830 735 790 737.5 C779.8 737.7 749.6 739.5 729.0 738.5 C708.4 737.5 687.4 735.2 666.6 731.5 C645.8 727.8 624.8 723.6 604.0 716.5 C583.2 709.4 561.5 697.1 542.0 689.0 C522.5 680.9 496.2 671.5 487.0 668.0 C460 655 440 630 431 600Z" fill="url(#topG)"/>
<clipPath id="topclip2"><path d="M431 600 C430 575 445 548 475 537 C495 530 560 515 631 512.6 C680 512 740 516 829.6 518.3 C850 518 870 517 907 510.5 C920 509 935 500 959 490 C975 484 1000 478 1032 478.7 C1080 481 1110 490 1141 497.6 C1150 500 1170 505 1200 517 L1137 578 L1137 588 C1142 600 1155 612 1160 620 C1163 626 1165 632 1166 636 C1158 637 1150 639 1135 641 C1120 642 1105 644 1085 646 C1065 648 1045 651 1026 656 C1010 660 998 666 982 674 C968 680 955 690 937 702 C920 712 905 722 878 730 C860 733 830 735 790 737.5 C779.8 737.7 749.6 739.5 729.0 738.5 C708.4 737.5 687.4 735.2 666.6 731.5 C645.8 727.8 624.8 723.6 604.0 716.5 C583.2 709.4 561.5 697.1 542.0 689.0 C522.5 680.9 496.2 671.5 487.0 668.0 C460 655 440 630 431 600Z"/></clipPath>
<g clip-path="url(#topclip2)" fill="none"><path d="M431 600 C430 575 445 548 475 537 C495 530 560 515 631 512.6 C680 512 740 516 829.6 518.3 C850 518 870 517 907 510.5 C920 509 935 500 959 490 C975 484 1000 478 1032 478.7 C1080 481 1110 490 1141 497.6 C1150 500 1170 505 1200 517 L1137 578 L1137 588 C1142 600 1155 612 1160 620 C1163 626 1165 632 1166 636 C1158 637 1150 639 1135 641 C1120 642 1105 644 1085 646 C1065 648 1045 651 1026 656 C1010 660 998 666 982 674 C968 680 955 690 937 702 C920 712 905 722 878 730 C860 733 830 735 790 737.5 C779.8 737.7 749.6 739.5 729.0 738.5 C708.4 737.5 687.4 735.2 666.6 731.5 C645.8 727.8 624.8 723.6 604.0 716.5 C583.2 709.4 561.5 697.1 542.0 689.0 C522.5 680.9 496.2 671.5 487.0 668.0 C460 655 440 630 431 600Z" stroke="#111" stroke-width="11"/><path d="M431 600 C430 575 445 548 475 537 C495 530 560 515 631 512.6 C680 512 740 516 829.6 518.3 C850 518 870 517 907 510.5 C920 509 935 500 959 490 C975 484 1000 478 1032 478.7 C1080 481 1110 490 1141 497.6 C1150 500 1170 505 1200 517 L1137 578 L1137 588 C1142 600 1155 612 1160 620 C1163 626 1165 632 1166 636 C1158 637 1150 639 1135 641 C1120 642 1105 644 1085 646 C1065 648 1045 651 1026 656 C1010 660 998 666 982 674 C968 680 955 690 937 702 C920 712 905 722 878 730 C860 733 830 735 790 737.5 C779.8 737.7 749.6 739.5 729.0 738.5 C708.4 737.5 687.4 735.2 666.6 731.5 C645.8 727.8 624.8 723.6 604.0 716.5 C583.2 709.4 561.5 697.1 542.0 689.0 C522.5 680.9 496.2 671.5 487.0 668.0 C460 655 440 630 431 600Z" stroke="#f3e6a6" stroke-width="9.6"/><path d="M431 600 C430 575 445 548 475 537 C495 530 560 515 631 512.6 C680 512 740 516 829.6 518.3 C850 518 870 517 907 510.5 C920 509 935 500 959 490 C975 484 1000 478 1032 478.7 C1080 481 1110 490 1141 497.6 C1150 500 1170 505 1200 517 L1137 578 L1137 588 C1142 600 1155 612 1160 620 C1163 626 1165 632 1166 636 C1158 637 1150 639 1135 641 C1120 642 1105 644 1085 646 C1065 648 1045 651 1026 656 C1010 660 998 666 982 674 C968 680 955 690 937 702 C920 712 905 722 878 730 C860 733 830 735 790 737.5 C779.8 737.7 749.6 739.5 729.0 738.5 C708.4 737.5 687.4 735.2 666.6 731.5 C645.8 727.8 624.8 723.6 604.0 716.5 C583.2 709.4 561.5 697.1 542.0 689.0 C522.5 680.9 496.2 671.5 487.0 668.0 C460 655 440 630 431 600Z" stroke="#111" stroke-width="6.6"/><path d="M431 600 C430 575 445 548 475 537 C495 530 560 515 631 512.6 C680 512 740 516 829.6 518.3 C850 518 870 517 907 510.5 C920 509 935 500 959 490 C975 484 1000 478 1032 478.7 C1080 481 1110 490 1141 497.6 C1150 500 1170 505 1200 517 L1137 578 L1137 588 C1142 600 1155 612 1160 620 C1163 626 1165 632 1166 636 C1158 637 1150 639 1135 641 C1120 642 1105 644 1085 646 C1065 648 1045 651 1026 656 C1010 660 998 666 982 674 C968 680 955 690 937 702 C920 712 905 722 878 730 C860 733 830 735 790 737.5 C779.8 737.7 749.6 739.5 729.0 738.5 C708.4 737.5 687.4 735.2 666.6 731.5 C645.8 727.8 624.8 723.6 604.0 716.5 C583.2 709.4 561.5 697.1 542.0 689.0 C522.5 680.9 496.2 671.5 487.0 668.0 C460 655 440 630 431 600Z" stroke="#e5803a" stroke-width="5.6"/></g>
<path d="M545 691 C522 683 500 674 487 668 C460 655 440 630 431 600 C430 575 445 548 475 537 C495 530 560 515 631 512.6 L631 516.6 C622.5 517.2 597.7 518.7 580.0 520.5 C562.3 522.3 541.7 524.4 525.0 527.5 C508.3 530.6 490.0 536.0 480.0 539.0 C470.0 542.0 470.4 541.9 465.0 545.5 C459.6 549.1 451.9 552.8 447.5 560.5 C443.1 568.2 439.5 582.5 438.5 591.5 C437.5 600.5 437.5 606.2 441.5 614.5 C445.5 622.8 456.1 634.7 462.5 641.0 C468.9 647.3 466.2 644.8 480.0 652.5 C493.8 660.2 534.2 681.7 545.0 687.5 Z" fill="#e4875a"/>
<path d="M545 687.5 C534.2 681.7 493.8 660.2 480.0 652.5 C466.2 644.8 468.9 647.3 462.5 641.0 C456.1 634.7 445.5 622.8 441.5 614.5 C437.5 606.2 437.5 600.5 438.5 591.5 C439.5 582.5 443.1 568.2 447.5 560.5 C451.9 552.8 459.6 549.1 465.0 545.5 C470.4 541.9 470.0 542.0 480.0 539.0 C490.0 536.0 508.3 530.6 525.0 527.5 C541.7 524.4 562.3 522.3 580.0 520.5 C597.7 518.7 622.5 517.2 631.0 516.6" stroke="#111" stroke-width="4.2" fill="none"/><path d="M545 687.5 C534.2 681.7 493.8 660.2 480.0 652.5 C466.2 644.8 468.9 647.3 462.5 641.0 C456.1 634.7 445.5 622.8 441.5 614.5 C437.5 606.2 437.5 600.5 438.5 591.5 C439.5 582.5 443.1 568.2 447.5 560.5 C451.9 552.8 459.6 549.1 465.0 545.5 C470.4 541.9 470.0 542.0 480.0 539.0 C490.0 536.0 508.3 530.6 525.0 527.5 C541.7 524.4 562.3 522.3 580.0 520.5 C597.7 518.7 622.5 517.2 631.0 516.6" stroke="#f3e6a6" stroke-width="2.2" fill="none"/>
<path d="M431 600 C430 575 445 548 475 537 C495 530 560 515 631 512.6 C680 512 740 516 829.6 518.3 C850 518 870 517 907 510.5 C920 509 935 500 959 490 C975 484 1000 478 1032 478.7 C1080 481 1110 490 1141 497.6 C1150 500 1170 505 1200 517 L1137 578 L1137 588 C1142 600 1155 612 1160 620 C1163 626 1165 632 1166 636 C1158 637 1150 639 1135 641 C1120 642 1105 644 1085 646 C1065 648 1045 651 1026 656 C1010 660 998 666 982 674 C968 680 955 690 937 702 C920 712 905 722 878 730 C860 733 830 735 790 737.5 C779.8 737.7 749.6 739.5 729.0 738.5 C708.4 737.5 687.4 735.2 666.6 731.5 C645.8 727.8 624.8 723.6 604.0 716.5 C583.2 709.4 561.5 697.1 542.0 689.0 C522.5 680.9 496.2 671.5 487.0 668.0 C460 655 440 630 431 600Z" fill="none" stroke="#111" stroke-width="1.8"/>
<filter id="noiseF" x="0" y="0" width="100%" height="100%"><feTurbulence type="fractalNoise" baseFrequency="0.012 0.3" numOctaves="3" seed="3"/><feColorMatrix type="matrix" values="0 0 0 0 0.86  0 0 0 0 0.66  0 0 0 0 0.45  -3 0 0 0 1.75"/></filter>
<g clip-path="url(#topclip)"><rect x="380" y="330" width="850" height="520" filter="url(#noiseF)" opacity="0.6" transform="rotate(-14 800 600)"/></g>
<clipPath id="topclip"><path d="M431 600 C430 575 445 548 475 537 C495 530 560 515 631 512.6 C680 512 740 516 829.6 518.3 C850 518 870 517 907 510.5 C920 509 935 500 959 490 C975 484 1000 478 1032 478.7 C1080 481 1110 490 1141 497.6 C1150 500 1170 505 1200 517 L1137 578 L1137 588 C1142 600 1155 612 1160 620 C1163 626 1165 632 1166 636 C1158 637 1150 639 1135 641 C1120 642 1105 644 1085 646 C1065 648 1045 651 1026 656 C1010 660 998 666 982 674 C968 680 955 690 937 702 C920 712 905 722 878 730 C860 733 830 735 790 737.5 C779.8 737.7 749.6 739.5 729.0 738.5 C708.4 737.5 687.4 735.2 666.6 731.5 C645.8 727.8 624.8 723.6 604.0 716.5 C583.2 709.4 561.5 697.1 542.0 689.0 C522.5 680.9 496.2 671.5 487.0 668.0 C460 655 440 630 431 600Z"/></clipPath>
<path d="M954 537 C972 503 1040 493 1090 498 C1117 500 1133 507 1129 515 C1125 523 1100 529 1060 534 C1020 539 985 544 965 544 C957 544 952 541 954 537Z" fill="#e0907c" stroke="#111" stroke-width="1.4"/>
<path d="M958 536.5 C976 507 1040 498 1088 502 C1112 504 1126 509 1123 515.5 C1118 522 1098 527 1060 532 C1020 537 985 542 967 542 C960 542 956 539.5 958 536.5Z" fill="#dd7630" stroke="#111" stroke-width="0.9"/>
<path d="M962 536 C981 513 1040 505 1085 508.5 C1104 510 1115 513 1113 517 C1100 522 1060 528 1020 534 C1000 537 985 540 973 541 C966 541 960 539 962 536Z" fill="#5e4334" stroke="#111" stroke-width="1.2"/>
<ellipse cx="1050" cy="522" rx="45" ry="8" fill="#735444" opacity="0.55" filter="url(#blur3)"/>
<path d="M934.8 514.9 C945 512 952 511 956 509.3 C960 506 966 503 977.8 502.4 C988 502 995 502.5 1004 504.5 L975 520 L962 541 C950 542 942 542 934.2 541 C926 539 920 537 916 532 C912 527 914 523 918.7 521 C924 518 930 516 934.8 514.9Z" fill="#f5eeb6" stroke="#111" stroke-width="1.4"/>
<ellipse cx="939.8" cy="530.4" rx="11.5" ry="6.8" transform="rotate(-8 939.8 530.4)" fill="#c8a898" stroke="#111" stroke-width="1"/>
<path d="M924 532 C920 524 928 519 938 518" stroke="#111" stroke-width="4.2" fill="none"/><path d="M924 532 C920 524 928 519 938 518" stroke="#e29a88" stroke-width="2.4" fill="none"/>
<path d="M946 524 C940 516 950 510 960 510" stroke="#111" stroke-width="4.2" fill="none"/><path d="M946 524 C940 516 950 510 960 510" stroke="#e29a88" stroke-width="2.4" fill="none"/>
<path d="M962 514 C960 508 968 505 976 506" stroke="#111" stroke-width="3.6" fill="none"/><path d="M962 514 C960 508 968 505 976 506" stroke="#e29a88" stroke-width="2" fill="none"/>
<ellipse cx="972" cy="511" rx="6" ry="3.2" fill="#a08478" stroke="#111" stroke-width="0.8"/><path d="M958 520 L978 514 L980 519 L962 526Z" fill="#f8e4c4" stroke="#111" stroke-width="0.8"/>
<path d="M822 567.5 L939 550 L939 557 L822 575Z" fill="#38302a" stroke="#111" stroke-width="1.2"/><path d="M824 577 L940 559.5" stroke="#f5eeb6" stroke-width="2.2"/><path d="M822 579 L940 561.5" stroke="#111" stroke-width="0.9"/>
<path d="M782 539 L900 519 M800 545 L892 530" stroke="#151515" stroke-width="2.3" fill="none"/>
<path d="M792 531.6 L829 554 M933 546 L968 565" stroke="#151515" stroke-width="2.6" fill="none"/><path d="M792 531.6 L829 554 M933 546 L968 565" stroke="#f3e6a6" stroke-width="1.3" fill="none"/>
<ellipse cx="762" cy="542" rx="20" ry="7.5" fill="#f6ecb4" stroke="#111" stroke-width="1.2"/><ellipse cx="762" cy="542" rx="15" ry="5.2" fill="#e2907a" stroke="#111" stroke-width="0.8"/><ellipse cx="762" cy="542" rx="8" ry="2.8" fill="#f6ecb4" stroke="#111" stroke-width="0.8"/>
<ellipse cx="1037" cy="607.5" rx="34" ry="11.5" fill="#e29a8a" stroke="#111" stroke-width="1.3"/><ellipse cx="1037" cy="607.5" rx="27" ry="8.5" fill="#f6ecb4" stroke="#111" stroke-width="0.8"/><ellipse cx="1037" cy="607.5" rx="23" ry="6.8" fill="#c4a698" stroke="#111" stroke-width="0.8"/>
<path d="M719.4 568.9 C740 567 755 566 763.2 566.9 L772 572.8 L860 622 L887.3 643.7 C880 648 870 652 860.7 654.6 L798.7 642.8 L791.8 641.8 L717.9 596 C715 590 716 587 720 584 L726.7 580.7 C722 576 719 572 719.4 568.9Z" fill="#3a3430" stroke="#111" stroke-width="1.6"/>
<path d="M726 582.7 L769 574.8 L860 622 L807.5 632.9 L796.7 630 L719 589Z" fill="#4d4845" stroke="#111" stroke-width="1"/>
<path d="M720 587 L796.7 630 L797 643 L718 597Z" fill="#463a33"/>
<path d="M807.5 632.9 L860.7 623 L887.3 643.7 L860.7 654.6 L798.7 642.8Z" fill="#4a4440" stroke="#111" stroke-width="1.2"/>
<path d="M721 570 L763 567.5 L771 573 L727 580Z" fill="#555050"/>
<path d="M771 575 L843 615 L845 621 L838 622 L767 582Z" fill="#f3f0ea" stroke="#111" stroke-width="1"/><path d="M769 579 L842 619" stroke="#222" stroke-width="0.8"/>
<ellipse cx="754.3" cy="585.7" rx="6.8" ry="4" fill="#4a3630" stroke="#111" stroke-width="0.9"/><ellipse cx="754.3" cy="580.7" rx="6.6" ry="5.8" fill="#5a443c" stroke="#111" stroke-width="0.9"/><ellipse cx="753.3" cy="578.7" rx="3" ry="2" fill="#7a625a" opacity="0.8"/>
<ellipse cx="769.0" cy="594.5" rx="6.8" ry="4" fill="#4a3630" stroke="#111" stroke-width="0.9"/><ellipse cx="769.0" cy="589.5" rx="6.6" ry="5.8" fill="#5a443c" stroke="#111" stroke-width="0.9"/><ellipse cx="768.0" cy="587.5" rx="3" ry="2" fill="#7a625a" opacity="0.8"/>
<ellipse cx="783.4" cy="603.4" rx="6.8" ry="4" fill="#4a3630" stroke="#111" stroke-width="0.9"/><ellipse cx="783.4" cy="598.4" rx="6.6" ry="5.8" fill="#5a443c" stroke="#111" stroke-width="0.9"/><ellipse cx="782.4" cy="596.4" rx="3" ry="2" fill="#7a625a" opacity="0.8"/>
<ellipse cx="796.7" cy="612.3" rx="6.8" ry="4" fill="#4a3630" stroke="#111" stroke-width="0.9"/><ellipse cx="796.7" cy="607.3" rx="6.6" ry="5.8" fill="#5a443c" stroke="#111" stroke-width="0.9"/><ellipse cx="795.7" cy="605.3" rx="3" ry="2" fill="#7a625a" opacity="0.8"/>
<ellipse cx="810.0" cy="620.6" rx="6.8" ry="4" fill="#4a3630" stroke="#111" stroke-width="0.9"/><ellipse cx="810.0" cy="615.6" rx="6.6" ry="5.8" fill="#5a443c" stroke="#111" stroke-width="0.9"/><ellipse cx="809.0" cy="613.6" rx="3" ry="2" fill="#7a625a" opacity="0.8"/>
<path d="M1080 540 L1929 396 L1929 426 L1130 571Z" fill="url(#fbG)"/>
<path d="M1080 540 L1130 571 L1130 577 L1080 546Z" fill="#e5803a" stroke="#111" stroke-width="1"/>
<path d="M1130 571 L1929 426 L1929 437 L1139 576.5 L1130 577Z" fill="url(#bindG)" stroke="#111" stroke-width="1"/>
<path d="M1080 540 L1929 396" stroke="#eee" stroke-width="1.2" fill="none"/>
<path d="M1149.0 567.6 L1124.6 532.4 M1168.0 564.1 L1143.2 529.3 M1188.0 560.5 L1162.8 525.9 M1209.0 556.7 L1183.4 522.5 M1231.0 552.7 L1205.0 518.8 M1254.0 548.5 L1227.5 515.0 M1280.0 543.8 L1253.0 510.7 M1306.0 539.1 L1278.5 506.3 M1335.0 533.8 L1306.9 501.5 M1364.0 528.5 L1335.3 496.7 M1395.0 522.9 L1365.7 491.5 M1429.0 516.7 L1399.0 485.9 M1464.0 510.4 L1433.3 480.1 M1502.0 503.5 L1470.6 473.8 M1541.0 496.4 L1508.8 467.3 M1583.0 488.8 L1549.9 460.3 M1627.0 480.8 L1593.1 453.0 M1674.0 472.3 L1639.1 445.2 M1725.0 463.0 L1689.1 436.7 M1778.0 453.4 L1741.0 427.9 M1834.0 443.2 L1795.9 418.6 M1893.0 432.5 L1853.7 408.8" stroke="#111" stroke-width="3.2" fill="none"/>
<path d="M1149.0 567.6 L1124.6 532.4 M1168.0 564.1 L1143.2 529.3 M1188.0 560.5 L1162.8 525.9 M1209.0 556.7 L1183.4 522.5 M1231.0 552.7 L1205.0 518.8 M1254.0 548.5 L1227.5 515.0 M1280.0 543.8 L1253.0 510.7 M1306.0 539.1 L1278.5 506.3 M1335.0 533.8 L1306.9 501.5 M1364.0 528.5 L1335.3 496.7 M1395.0 522.9 L1365.7 491.5 M1429.0 516.7 L1399.0 485.9 M1464.0 510.4 L1433.3 480.1 M1502.0 503.5 L1470.6 473.8 M1541.0 496.4 L1508.8 467.3 M1583.0 488.8 L1549.9 460.3 M1627.0 480.8 L1593.1 453.0 M1674.0 472.3 L1639.1 445.2 M1725.0 463.0 L1689.1 436.7 M1778.0 453.4 L1741.0 427.9 M1834.0 443.2 L1795.9 418.6 M1893.0 432.5 L1853.7 408.8" stroke="#efe3a0" stroke-width="1.6" fill="none"/>
<path d="M1167.5 556.3 L1178.5 554.4 L1163.5 533.6 L1152.5 535.5 Z M1208.8 548.9 L1220.9 546.8 L1205.4 526.4 L1193.3 528.5 Z M1254.5 540.8 L1268.8 538.2 L1252.8 518.3 L1238.5 520.7 Z M1307.0 531.4 L1322.9 528.5 L1306.2 509.1 L1290.3 511.8 Z M1365.2 520.9 L1382.2 517.9 L1364.8 499.0 L1347.8 501.9 Z M1430.8 509.2 L1450.1 505.7 L1431.9 487.4 L1412.6 490.8 Z M1543.9 488.9 L1567.0 484.8 L1547.4 467.6 L1524.3 471.5 Z M1630.7 473.4 L1656.5 468.7 L1635.9 452.3 L1610.0 456.8 Z M1729.6 455.6 L1758.8 450.4 L1736.9 435.0 L1707.8 440.0 Z M1839.5 435.9 L1872.0 430.1 L1848.8 415.7 L1816.3 421.3 Z" fill="#2a2420" stroke="#111" stroke-width="2.4"/>
<path d="M1167.5 556.3 L1178.5 554.4 L1163.5 533.6 L1152.5 535.5 Z M1208.8 548.9 L1220.9 546.8 L1205.4 526.4 L1193.3 528.5 Z M1254.5 540.8 L1268.8 538.2 L1252.8 518.3 L1238.5 520.7 Z M1307.0 531.4 L1322.9 528.5 L1306.2 509.1 L1290.3 511.8 Z M1365.2 520.9 L1382.2 517.9 L1364.8 499.0 L1347.8 501.9 Z M1430.8 509.2 L1450.1 505.7 L1431.9 487.4 L1412.6 490.8 Z M1543.9 488.9 L1567.0 484.8 L1547.4 467.6 L1524.3 471.5 Z M1630.7 473.4 L1656.5 468.7 L1635.9 452.3 L1610.0 456.8 Z M1729.6 455.6 L1758.8 450.4 L1736.9 435.0 L1707.8 440.0 Z M1839.5 435.9 L1872.0 430.1 L1848.8 415.7 L1816.3 421.3 Z" fill="none" stroke="#b35a2a" stroke-width="0.9"/>
<path d="M1447 487 L1470 484 L1478 500 L1455 503Z" fill="#efe7b0"/>
<path d="M1171 573 L1264 557" stroke="#111" stroke-width="1"/>
<path d="M1171 573 V790 M1166 644 V856" stroke="#111" stroke-width="1.1"/>
<path d="M1213 641 C1225 639 1238 641 1239 652 C1240 660 1232 664 1214 666 C1234 665 1242 670 1241.5 678 C1241 688 1230 692 1214 694Z M1217 646.5 V661 C1225 660.5 1230 657 1230 652.5 C1229.5 648 1224 646.5 1217 646.5Z M1217 670.5 V688.5 C1227 688 1232.5 684 1232.5 678.5 C1232.5 673 1226 670.5 1217 670.5Z" fill="#efe6a6" fill-rule="evenodd" stroke="#1a1a1a" stroke-width="0.8"/>
<path d="M1225 618.5 C1212 621 1207 640 1206.5 660 C1206 682 1207 700 1200 710 C1197 714 1195 715 1193 714 L1195 717 C1203 717 1210 712 1213 704 C1216 690 1216 670 1216 655 C1216 636 1219 625 1227 620Z" fill="#efe6a6" stroke="#1a1a1a" stroke-width="0.8"/>
<circle cx="1227.5" cy="624.5" r="4" fill="#efe6a6" stroke="#1a1a1a" stroke-width="0.8"/><circle cx="1192.5" cy="709" r="4.5" fill="#efe6a6" stroke="#1a1a1a" stroke-width="0.8"/>
<path d="M761.0 583.0 L775.0 573.0 L1929.0 393.9" stroke="#6a5a20" stroke-width="4.0" fill="none" opacity="0.35"/>
<path d="M761.0 583.0 L775.0 573.0 L1929.0 393.9" stroke="#d9b040" stroke-width="3.2" fill="none"/>
<path d="M776.0 591.0 L790.8 582.7 L1929.0 400.1" stroke="#6a5a20" stroke-width="3.4" fill="none" opacity="0.35"/>
<path d="M776.0 591.0 L790.8 582.7 L1929.0 400.1" stroke="#ecdc92" stroke-width="2.6" fill="none"/>
<path d="M790.0 600.0 L806.5 591.5 L1929.0 406.3" stroke="#6a5a20" stroke-width="3.1" fill="none" opacity="0.35"/>
<path d="M790.0 600.0 L806.5 591.5 L1929.0 406.3" stroke="#e2c150" stroke-width="2.3" fill="none"/>
<path d="M803.0 609.0 L821.3 600.4 L1929.0 413.0" stroke="#6a5a20" stroke-width="2.8" fill="none" opacity="0.35"/>
<path d="M803.0 609.0 L821.3 600.4 L1929.0 413.0" stroke="#e6cc66" stroke-width="2.0" fill="none"/>
<path d="M817.0 617.0 L838.0 608.3 L1929.0 419.7" stroke="#6a5a20" stroke-width="2.6" fill="none" opacity="0.35"/>
<path d="M817.0 617.0 L838.0 608.3 L1929.0 419.7" stroke="#e0be52" stroke-width="1.8" fill="none"/>
</svg>
<div class="panelhdr" style="top:120px"><svg class="abs" style="left:5px;top:8px" width="12" height="8" viewBox="0 0 12 8"><path d="M0 4 L5 0 V8Z M6 4 L11 0 V8Z" fill="#333"/></svg><span>NAVIGATEUR</span><svg class="abs" style="left:278px;top:6px" width="11" height="11" viewBox="0 0 11 11"><circle cx="5.5" cy="5.5" r="5.2" fill="#222"/><rect x="2.5" y="4.6" width="6" height="1.8" fill="#fff"/></svg></div>
<div id="scroll"></div><div id="thumb"></div>
<div class="abs" style="left:33px;top:150px;width:25px;height:20px;background:#fafafa"></div>
<svg class="abs" style="left:38px;top:154px" width="12" height="12" viewBox="0 0 12 12"><defs><linearGradient id="trig" x1="0" x2="1" y1="0" y2="1"><stop offset="0" stop-color="#bbb"/><stop offset="1" stop-color="#222"/></linearGradient></defs><path d="M0.5 11.5 L11.5 0.5 V11.5Z" fill="url(#trig)" stroke="#222" stroke-width="1"/></svg>
<div class="abs" style="left:58px;top:150px;width:99px;height:20px;background:#f1f1f1"></div>
<svg class="abs" style="left:61px;top:155px" width="17" height="11" viewBox="0 0 17 11"><path d="M0.5 5.5 Q8.5 -3 16.5 5.5 Q8.5 14 0.5 5.5Z" fill="#9a9a9a"/><circle cx="8.5" cy="5.5" r="3" fill="#f2f2f2"/><circle cx="8.5" cy="5.5" r="1.8" fill="#9a9a9a"/></svg>
<svg class="abs" style="left:86px;top:153px" width="17" height="14" viewBox="0 0 17 14"><path d="M0 1 H7 L8 2.5 H16 V13.5 H0Z" fill="#979797"/><rect x="0" y="0" width="7" height="1.5" fill="#979797"/></svg>
<div class="abs" style="left:116px;top:154px;font-size:11px;color:#2e2e2e">Corps</div>
<div class="row" style="top:174px"><span class="rbg" style="padding-right:12.1px"><svg class="eye" width="17" height="11" viewBox="0 0 17 11"><path d="M0.5 5.5 Q8.5 -3 16.5 5.5 Q8.5 14 0.5 5.5Z" fill="#9a9a9a"/><circle cx="8.5" cy="5.5" r="3" fill="#f2f2f2"/><circle cx="8.5" cy="5.5" r="1.8" fill="#9a9a9a"/></svg><svg class="bd" width="17" height="17" viewBox="0 0 17 17"><rect x="0.75" y="0.75" width="15.5" height="15.5" rx="3.5" fill="url(#bg1)" stroke="#3a3f48" stroke-width="1.3"/><path d="M1.5 4.5 Q8.5 7 15.5 4.5 V2 Q15 1.4 14 1.4 H3 Q1.5 1.4 1.5 3Z" fill="#fff"/></svg><span class="rt">Curved Back</span></span></div>
<div class="row" style="top:198px"><span class="rbg" style="padding-right:12.3px"><svg class="eye" width="17" height="11" viewBox="0 0 17 11"><path d="M0.5 5.5 Q8.5 -3 16.5 5.5 Q8.5 14 0.5 5.5Z" fill="#9a9a9a"/><circle cx="8.5" cy="5.5" r="3" fill="#f2f2f2"/><circle cx="8.5" cy="5.5" r="1.8" fill="#9a9a9a"/></svg><svg class="bd" width="17" height="17" viewBox="0 0 17 17"><rect x="0.75" y="0.75" width="15.5" height="15.5" rx="3.5" fill="url(#bg1)" stroke="#3a3f48" stroke-width="1.3"/><path d="M1.5 4.5 Q8.5 7 15.5 4.5 V2 Q15 1.4 14 1.4 H3 Q1.5 1.4 1.5 3Z" fill="#fff"/></svg><span class="rt">Back Brace 5</span></span></div>
<div class="row" style="top:222px"><span class="rbg" style="padding-right:12.3px"><svg class="eye" width="17" height="11" viewBox="0 0 17 11"><path d="M0.5 5.5 Q8.5 -3 16.5 5.5 Q8.5 14 0.5 5.5Z" fill="#9a9a9a"/><circle cx="8.5" cy="5.5" r="3" fill="#f2f2f2"/><circle cx="8.5" cy="5.5" r="1.8" fill="#9a9a9a"/></svg><svg class="bd" width="17" height="17" viewBox="0 0 17 17"><rect x="0.75" y="0.75" width="15.5" height="15.5" rx="3.5" fill="url(#bg1)" stroke="#3a3f48" stroke-width="1.3"/><path d="M1.5 4.5 Q8.5 7 15.5 4.5 V2 Q15 1.4 14 1.4 H3 Q1.5 1.4 1.5 3Z" fill="#fff"/></svg><span class="rt">Back Brace 4</span></span></div>
<div class="row" style="top:246px"><span class="rbg" style="padding-right:12.3px"><svg class="eye" width="17" height="11" viewBox="0 0 17 11"><path d="M0.5 5.5 Q8.5 -3 16.5 5.5 Q8.5 14 0.5 5.5Z" fill="#9a9a9a"/><circle cx="8.5" cy="5.5" r="3" fill="#f2f2f2"/><circle cx="8.5" cy="5.5" r="1.8" fill="#9a9a9a"/></svg><svg class="bd" width="17" height="17" viewBox="0 0 17 17"><rect x="0.75" y="0.75" width="15.5" height="15.5" rx="3.5" fill="url(#bg1)" stroke="#3a3f48" stroke-width="1.3"/><path d="M1.5 4.5 Q8.5 7 15.5 4.5 V2 Q15 1.4 14 1.4 H3 Q1.5 1.4 1.5 3Z" fill="#fff"/></svg><span class="rt">Back Brace 3</span></span></div>
<div class="row" style="top:270px"><span class="rbg" style="padding-right:12.3px"><svg class="eye" width="17" height="11" viewBox="0 0 17 11"><path d="M0.5 5.5 Q8.5 -3 16.5 5.5 Q8.5 14 0.5 5.5Z" fill="#9a9a9a"/><circle cx="8.5" cy="5.5" r="3" fill="#f2f2f2"/><circle cx="8.5" cy="5.5" r="1.8" fill="#9a9a9a"/></svg><svg class="bd" width="17" height="17" viewBox="0 0 17 17"><rect x="0.75" y="0.75" width="15.5" height="15.5" rx="3.5" fill="url(#bg1)" stroke="#3a3f48" stroke-width="1.3"/><path d="M1.5 4.5 Q8.5 7 15.5 4.5 V2 Q15 1.4 14 1.4 H3 Q1.5 1.4 1.5 3Z" fill="#fff"/></svg><span class="rt">Back Brace 2</span></span></div>
<div class="row" style="top:294px"><span class="rbg" style="padding-right:12.3px"><svg class="eye" width="17" height="11" viewBox="0 0 17 11"><path d="M0.5 5.5 Q8.5 -3 16.5 5.5 Q8.5 14 0.5 5.5Z" fill="#9a9a9a"/><circle cx="8.5" cy="5.5" r="3" fill="#f2f2f2"/><circle cx="8.5" cy="5.5" r="1.8" fill="#9a9a9a"/></svg><svg class="bd" width="17" height="17" viewBox="0 0 17 17"><rect x="0.75" y="0.75" width="15.5" height="15.5" rx="3.5" fill="url(#bg1)" stroke="#3a3f48" stroke-width="1.3"/><path d="M1.5 4.5 Q8.5 7 15.5 4.5 V2 Q15 1.4 14 1.4 H3 Q1.5 1.4 1.5 3Z" fill="#fff"/></svg><span class="rt">Back Brace 1</span></span></div>
<div class="row" style="top:318px"><span class="rbg" style="padding-right:11.1px"><svg class="eye" width="17" height="11" viewBox="0 0 17 11"><path d="M0.5 5.5 Q8.5 -3 16.5 5.5 Q8.5 14 0.5 5.5Z" fill="#9a9a9a"/><circle cx="8.5" cy="5.5" r="3" fill="#f2f2f2"/><circle cx="8.5" cy="5.5" r="1.8" fill="#9a9a9a"/></svg><svg class="bd" width="17" height="17" viewBox="0 0 17 17"><rect x="0.75" y="0.75" width="15.5" height="15.5" rx="3.5" fill="url(#bg1)" stroke="#3a3f48" stroke-width="1.3"/><path d="M1.5 4.5 Q8.5 7 15.5 4.5 V2 Q15 1.4 14 1.4 H3 Q1.5 1.4 1.5 3Z" fill="#fff"/></svg><span class="rt">Corps48</span></span></div>
<div class="row" style="top:342px"><span class="rbg" style="padding-right:11.1px"><svg class="eye" width="17" height="11" viewBox="0 0 17 11"><path d="M0.5 5.5 Q8.5 -3 16.5 5.5 Q8.5 14 0.5 5.5Z" fill="#9a9a9a"/><circle cx="8.5" cy="5.5" r="3" fill="#f2f2f2"/><circle cx="8.5" cy="5.5" r="1.8" fill="#9a9a9a"/></svg><svg class="bd" width="17" height="17" viewBox="0 0 17 17"><rect x="0.75" y="0.75" width="15.5" height="15.5" rx="3.5" fill="url(#bg1)" stroke="#3a3f48" stroke-width="1.3"/><path d="M1.5 4.5 Q8.5 7 15.5 4.5 V2 Q15 1.4 14 1.4 H3 Q1.5 1.4 1.5 3Z" fill="#fff"/></svg><span class="rt">Corps53</span></span></div>
<div class="row" style="top:366px"><span class="rbg" style="padding-right:11.1px"><svg class="eye" width="17" height="11" viewBox="0 0 17 11"><path d="M0.5 5.5 Q8.5 -3 16.5 5.5 Q8.5 14 0.5 5.5Z" fill="#9a9a9a"/><circle cx="8.5" cy="5.5" r="3" fill="#f2f2f2"/><circle cx="8.5" cy="5.5" r="1.8" fill="#9a9a9a"/></svg><svg class="bd" width="17" height="17" viewBox="0 0 17 17"><rect x="0.75" y="0.75" width="15.5" height="15.5" rx="3.5" fill="url(#bg1)" stroke="#3a3f48" stroke-width="1.3"/><path d="M1.5 4.5 Q8.5 7 15.5 4.5 V2 Q15 1.4 14 1.4 H3 Q1.5 1.4 1.5 3Z" fill="#fff"/></svg><span class="rt">Corps56</span></span></div>
<div class="row" style="top:390px"><span class="rbg" style="padding-right:10.4px"><svg class="eye" width="17" height="11" viewBox="0 0 17 11"><path d="M0.5 5.5 Q8.5 -3 16.5 5.5 Q8.5 14 0.5 5.5Z" fill="#9a9a9a"/><circle cx="8.5" cy="5.5" r="3" fill="#f2f2f2"/><circle cx="8.5" cy="5.5" r="1.8" fill="#9a9a9a"/></svg><svg class="bd" width="17" height="17" viewBox="0 0 17 17"><rect x="0.75" y="0.75" width="15.5" height="15.5" rx="3.5" fill="url(#bg1)" stroke="#3a3f48" stroke-width="1.3"/><path d="M1.5 4.5 Q8.5 7 15.5 4.5 V2 Q15 1.4 14 1.4 H3 Q1.5 1.4 1.5 3Z" fill="#fff"/></svg><span class="rt">&nbsp;Neck</span></span></div>
<div class="row" style="top:414px"><span class="rbg" style="padding-right:10.3px"><svg class="eye" width="17" height="11" viewBox="0 0 17 11"><path d="M0.5 5.5 Q8.5 -3 16.5 5.5 Q8.5 14 0.5 5.5Z" fill="#9a9a9a"/><circle cx="8.5" cy="5.5" r="3" fill="#f2f2f2"/><circle cx="8.5" cy="5.5" r="1.8" fill="#9a9a9a"/></svg><svg class="bd" width="17" height="17" viewBox="0 0 17 17"><rect x="0.75" y="0.75" width="15.5" height="15.5" rx="3.5" fill="url(#bg1)" stroke="#3a3f48" stroke-width="1.3"/><path d="M1.5 4.5 Q8.5 7 15.5 4.5 V2 Q15 1.4 14 1.4 H3 Q1.5 1.4 1.5 3Z" fill="#fff"/></svg><span class="rt">Neck</span></span></div>
<div class="row" style="top:438px"><span class="rbg" style="padding-right:11.3px"><svg class="eye" width="17" height="11" viewBox="0 0 17 11"><path d="M0.5 5.5 Q8.5 -3 16.5 5.5 Q8.5 14 0.5 5.5Z" fill="#9a9a9a"/><circle cx="8.5" cy="5.5" r="3" fill="#f2f2f2"/><circle cx="8.5" cy="5.5" r="1.8" fill="#9a9a9a"/></svg><svg class="bd" width="17" height="17" viewBox="0 0 17 17"><rect x="0.75" y="0.75" width="15.5" height="15.5" rx="3.5" fill="url(#bg1)" stroke="#3a3f48" stroke-width="1.3"/><path d="M1.5 4.5 Q8.5 7 15.5 4.5 V2 Q15 1.4 14 1.4 H3 Q1.5 1.4 1.5 3Z" fill="#fff"/></svg><span class="rt">ButtBlock</span></span></div>
<div class="row" style="top:462px"><span class="rbg" style="padding-right:11.7px"><svg class="eye" width="17" height="11" viewBox="0 0 17 11"><path d="M0.5 5.5 Q8.5 -3 16.5 5.5 Q8.5 14 0.5 5.5Z" fill="#9a9a9a"/><circle cx="8.5" cy="5.5" r="3" fill="#f2f2f2"/><circle cx="8.5" cy="5.5" r="1.8" fill="#9a9a9a"/></svg><svg class="bd" width="17" height="17" viewBox="0 0 17 17"><rect x="0.75" y="0.75" width="15.5" height="15.5" rx="3.5" fill="url(#bg1)" stroke="#3a3f48" stroke-width="1.3"/><path d="M1.5 4.5 Q8.5 7 15.5 4.5 V2 Q15 1.4 14 1.4 H3 Q1.5 1.4 1.5 3Z" fill="#fff"/></svg><span class="rt">HeadBlock</span></span></div>
<div class="row" style="top:486px"><span class="rbg" style="padding-right:11.5px"><svg class="eye" width="17" height="11" viewBox="0 0 17 11"><path d="M0.5 5.5 Q8.5 -3 16.5 5.5 Q8.5 14 0.5 5.5Z" fill="#9a9a9a"/><circle cx="8.5" cy="5.5" r="3" fill="#f2f2f2"/><circle cx="8.5" cy="5.5" r="1.8" fill="#9a9a9a"/></svg><svg class="bd" width="17" height="17" viewBox="0 0 17 17"><rect x="0.75" y="0.75" width="15.5" height="15.5" rx="3.5" fill="url(#bg1)" stroke="#3a3f48" stroke-width="1.3"/><path d="M1.5 4.5 Q8.5 7 15.5 4.5 V2 Q15 1.4 14 1.4 H3 Q1.5 1.4 1.5 3Z" fill="#fff"/></svg><span class="rt">Bass Side</span></span></div>
<div class="row" style="top:510px"><span class="rbg" style="padding-right:11.8px"><svg class="eye" width="17" height="11" viewBox="0 0 17 11"><path d="M0.5 5.5 Q8.5 -3 16.5 5.5 Q8.5 14 0.5 5.5Z" fill="#9a9a9a"/><circle cx="8.5" cy="5.5" r="3" fill="#f2f2f2"/><circle cx="8.5" cy="5.5" r="1.8" fill="#9a9a9a"/></svg><svg class="bd" width="17" height="17" viewBox="0 0 17 17"><rect x="0.75" y="0.75" width="15.5" height="15.5" rx="3.5" fill="url(#bg1)" stroke="#3a3f48" stroke-width="1.3"/><path d="M1.5 4.5 Q8.5 7 15.5 4.5 V2 Q15 1.4 14 1.4 H3 Q1.5 1.4 1.5 3Z" fill="#fff"/></svg><span class="rt">Treble Side</span></span></div>
<div class="row" style="top:534px"><span class="rbg" style="padding-right:12.2px"><svg class="eye" width="17" height="11" viewBox="0 0 17 11"><path d="M0.5 5.5 Q8.5 -3 16.5 5.5 Q8.5 14 0.5 5.5Z" fill="#9a9a9a"/><circle cx="8.5" cy="5.5" r="3" fill="#f2f2f2"/><circle cx="8.5" cy="5.5" r="1.8" fill="#9a9a9a"/></svg><svg class="bd" width="17" height="17" viewBox="0 0 17 17"><rect x="0.75" y="0.75" width="15.5" height="15.5" rx="3.5" fill="url(#bg1)" stroke="#3a3f48" stroke-width="1.3"/><path d="M1.5 4.5 Q8.5 7 15.5 4.5 V2 Q15 1.4 14 1.4 H3 Q1.5 1.4 1.5 3Z" fill="#fff"/></svg><span class="rt">Neck Binding</span></span></div>
<div class="row" style="top:558px"><span class="rbg" style="padding-right:9.9px"><svg class="eye" width="17" height="11" viewBox="0 0 17 11"><path d="M0.5 5.5 Q8.5 -3 16.5 5.5 Q8.5 14 0.5 5.5Z" fill="#9a9a9a"/><circle cx="8.5" cy="5.5" r="3" fill="#f2f2f2"/><circle cx="8.5" cy="5.5" r="1.8" fill="#9a9a9a"/></svg><svg class="bd" width="17" height="17" viewBox="0 0 17 17"><rect x="0.75" y="0.75" width="15.5" height="15.5" rx="3.5" fill="url(#bg1)" stroke="#3a3f48" stroke-width="1.3"/><path d="M1.5 4.5 Q8.5 7 15.5 4.5 V2 Q15 1.4 14 1.4 H3 Q1.5 1.4 1.5 3Z" fill="#fff"/></svg><span class="rt">Top</span></span></div>
<div class="row" style="top:582px"><span class="rbg" style="padding-right:10.8px"><svg class="eye" width="17" height="11" viewBox="0 0 17 11"><path d="M0.5 5.5 Q8.5 -3 16.5 5.5 Q8.5 14 0.5 5.5Z" fill="#9a9a9a"/><circle cx="8.5" cy="5.5" r="3" fill="#f2f2f2"/><circle cx="8.5" cy="5.5" r="1.8" fill="#9a9a9a"/></svg><svg class="bd" width="17" height="17" viewBox="0 0 17 17"><rect x="0.75" y="0.75" width="15.5" height="15.5" rx="3.5" fill="url(#bg1)" stroke="#3a3f48" stroke-width="1.3"/><path d="M1.5 4.5 Q8.5 7 15.5 4.5 V2 Q15 1.4 14 1.4 H3 Q1.5 1.4 1.5 3Z" fill="#fff"/></svg><span class="rt">Binding</span></span></div>
<div class="row" style="top:606px"><span class="rbg" style="padding-right:13.7px"><svg class="eye" width="17" height="11" viewBox="0 0 17 11"><path d="M0.5 5.5 Q8.5 -3 16.5 5.5 Q8.5 14 0.5 5.5Z" fill="#9a9a9a"/><circle cx="8.5" cy="5.5" r="3" fill="#f2f2f2"/><circle cx="8.5" cy="5.5" r="1.8" fill="#9a9a9a"/></svg><svg class="bd" width="17" height="17" viewBox="0 0 17 17"><rect x="0.75" y="0.75" width="15.5" height="15.5" rx="3.5" fill="url(#bg1)" stroke="#3a3f48" stroke-width="1.3"/><path d="M1.5 4.5 Q8.5 7 15.5 4.5 V2 Q15 1.4 14 1.4 H3 Q1.5 1.4 1.5 3Z" fill="#fff"/></svg><span class="rt">SoundHole Binding</span></span></div>
<div class="row" style="top:630px"><span class="rbg" style="padding-right:13.4px"><svg class="eye" width="17" height="11" viewBox="0 0 17 11"><path d="M0.5 5.5 Q8.5 -3 16.5 5.5 Q8.5 14 0.5 5.5Z" fill="#9a9a9a"/><circle cx="8.5" cy="5.5" r="3" fill="#f2f2f2"/><circle cx="8.5" cy="5.5" r="1.8" fill="#9a9a9a"/></svg><svg class="bd" width="17" height="17" viewBox="0 0 17 17"><rect x="0.75" y="0.75" width="15.5" height="15.5" rx="3.5" fill="url(#bg1)" stroke="#3a3f48" stroke-width="1.3"/><path d="M1.5 4.5 Q8.5 7 15.5 4.5 V2 Q15 1.4 14 1.4 H3 Q1.5 1.4 1.5 3Z" fill="#fff"/></svg><span class="rt">Fretboard Binding</span></span></div>
<div class="row" style="top:654px"><span class="rbg" style="padding-right:11.4px"><svg class="eye" width="17" height="11" viewBox="0 0 17 11"><path d="M0.5 5.5 Q8.5 -3 16.5 5.5 Q8.5 14 0.5 5.5Z" fill="#9a9a9a"/><circle cx="8.5" cy="5.5" r="3" fill="#f2f2f2"/><circle cx="8.5" cy="5.5" r="1.8" fill="#9a9a9a"/></svg><svg class="bd" width="17" height="17" viewBox="0 0 17 17"><rect x="0.75" y="0.75" width="15.5" height="15.5" rx="3.5" fill="url(#bg1)" stroke="#3a3f48" stroke-width="1.3"/><path d="M1.5 4.5 Q8.5 7 15.5 4.5 V2 Q15 1.4 14 1.4 H3 Q1.5 1.4 1.5 3Z" fill="#fff"/></svg><span class="rt">Fretboard</span></span></div>
<div class="row" style="top:678px"><span class="rbg" style="padding-right:9.9px"><svg class="eye" width="17" height="11" viewBox="0 0 17 11"><path d="M0.5 5.5 Q8.5 -3 16.5 5.5 Q8.5 14 0.5 5.5Z" fill="#9a9a9a"/><circle cx="8.5" cy="5.5" r="3" fill="#f2f2f2"/><circle cx="8.5" cy="5.5" r="1.8" fill="#9a9a9a"/></svg><svg class="bd" width="17" height="17" viewBox="0 0 17 17"><rect x="0.75" y="0.75" width="15.5" height="15.5" rx="3.5" fill="url(#bg1)" stroke="#3a3f48" stroke-width="1.3"/><path d="M1.5 4.5 Q8.5 7 15.5 4.5 V2 Q15 1.4 14 1.4 H3 Q1.5 1.4 1.5 3Z" fill="#fff"/></svg><span class="rt">F24</span></span></div>
<div class="row" style="top:702px"><span class="rbg" style="padding-right:9.9px"><svg class="eye" width="17" height="11" viewBox="0 0 17 11"><path d="M0.5 5.5 Q8.5 -3 16.5 5.5 Q8.5 14 0.5 5.5Z" fill="#9a9a9a"/><circle cx="8.5" cy="5.5" r="3" fill="#f2f2f2"/><circle cx="8.5" cy="5.5" r="1.8" fill="#9a9a9a"/></svg><svg class="bd" width="17" height="17" viewBox="0 0 17 17"><rect x="0.75" y="0.75" width="15.5" height="15.5" rx="3.5" fill="url(#bg1)" stroke="#3a3f48" stroke-width="1.3"/><path d="M1.5 4.5 Q8.5 7 15.5 4.5 V2 Q15 1.4 14 1.4 H3 Q1.5 1.4 1.5 3Z" fill="#fff"/></svg><span class="rt">F23</span></span></div>
<div class="row" style="top:726px"><span class="rbg" style="padding-right:9.9px"><svg class="eye" width="17" height="11" viewBox="0 0 17 11"><path d="M0.5 5.5 Q8.5 -3 16.5 5.5 Q8.5 14 0.5 5.5Z" fill="#9a9a9a"/><circle cx="8.5" cy="5.5" r="3" fill="#f2f2f2"/><circle cx="8.5" cy="5.5" r="1.8" fill="#9a9a9a"/></svg><svg class="bd" width="17" height="17" viewBox="0 0 17 17"><rect x="0.75" y="0.75" width="15.5" height="15.5" rx="3.5" fill="url(#bg1)" stroke="#3a3f48" stroke-width="1.3"/><path d="M1.5 4.5 Q8.5 7 15.5 4.5 V2 Q15 1.4 14 1.4 H3 Q1.5 1.4 1.5 3Z" fill="#fff"/></svg><span class="rt">F22</span></span></div>
<div class="row" style="top:750px"><span class="rbg" style="padding-right:9.9px"><svg class="eye" width="17" height="11" viewBox="0 0 17 11"><path d="M0.5 5.5 Q8.5 -3 16.5 5.5 Q8.5 14 0.5 5.5Z" fill="#9a9a9a"/><circle cx="8.5" cy="5.5" r="3" fill="#f2f2f2"/><circle cx="8.5" cy="5.5" r="1.8" fill="#9a9a9a"/></svg><svg class="bd" width="17" height="17" viewBox="0 0 17 17"><rect x="0.75" y="0.75" width="15.5" height="15.5" rx="3.5" fill="url(#bg1)" stroke="#3a3f48" stroke-width="1.3"/><path d="M1.5 4.5 Q8.5 7 15.5 4.5 V2 Q15 1.4 14 1.4 H3 Q1.5 1.4 1.5 3Z" fill="#fff"/></svg><span class="rt">F21</span></span></div>
<div class="row" style="top:774px"><span class="rbg" style="padding-right:9.9px"><svg class="eye" width="17" height="11" viewBox="0 0 17 11"><path d="M0.5 5.5 Q8.5 -3 16.5 5.5 Q8.5 14 0.5 5.5Z" fill="#9a9a9a"/><circle cx="8.5" cy="5.5" r="3" fill="#f2f2f2"/><circle cx="8.5" cy="5.5" r="1.8" fill="#9a9a9a"/></svg><svg class="bd" width="17" height="17" viewBox="0 0 17 17"><rect x="0.75" y="0.75" width="15.5" height="15.5" rx="3.5" fill="url(#bg1)" stroke="#3a3f48" stroke-width="1.3"/><path d="M1.5 4.5 Q8.5 7 15.5 4.5 V2 Q15 1.4 14 1.4 H3 Q1.5 1.4 1.5 3Z" fill="#fff"/></svg><span class="rt">F20</span></span></div>
<div class="row" style="top:798px"><span class="rbg" style="padding-right:9.9px"><svg class="eye" width="17" height="11" viewBox="0 0 17 11"><path d="M0.5 5.5 Q8.5 -3 16.5 5.5 Q8.5 14 0.5 5.5Z" fill="#9a9a9a"/><circle cx="8.5" cy="5.5" r="3" fill="#f2f2f2"/><circle cx="8.5" cy="5.5" r="1.8" fill="#9a9a9a"/></svg><svg class="bd" width="17" height="17" viewBox="0 0 17 17"><rect x="0.75" y="0.75" width="15.5" height="15.5" rx="3.5" fill="url(#bg1)" stroke="#3a3f48" stroke-width="1.3"/><path d="M1.5 4.5 Q8.5 7 15.5 4.5 V2 Q15 1.4 14 1.4 H3 Q1.5 1.4 1.5 3Z" fill="#fff"/></svg><span class="rt">F19</span></span></div>
<div class="row" style="top:822px"><span class="rbg" style="padding-right:9.9px"><svg class="eye" width="17" height="11" viewBox="0 0 17 11"><path d="M0.5 5.5 Q8.5 -3 16.5 5.5 Q8.5 14 0.5 5.5Z" fill="#9a9a9a"/><circle cx="8.5" cy="5.5" r="3" fill="#f2f2f2"/><circle cx="8.5" cy="5.5" r="1.8" fill="#9a9a9a"/></svg><svg class="bd" width="17" height="17" viewBox="0 0 17 17"><rect x="0.75" y="0.75" width="15.5" height="15.5" rx="3.5" fill="url(#bg1)" stroke="#3a3f48" stroke-width="1.3"/><path d="M1.5 4.5 Q8.5 7 15.5 4.5 V2 Q15 1.4 14 1.4 H3 Q1.5 1.4 1.5 3Z" fill="#fff"/></svg><span class="rt">F18</span></span></div>
<div class="row" style="top:846px"><span class="rbg" style="padding-right:9.9px"><svg class="eye" width="17" height="11" viewBox="0 0 17 11"><path d="M0.5 5.5 Q8.5 -3 16.5 5.5 Q8.5 14 0.5 5.5Z" fill="#9a9a9a"/><circle cx="8.5" cy="5.5" r="3" fill="#f2f2f2"/><circle cx="8.5" cy="5.5" r="1.8" fill="#9a9a9a"/></svg><svg class="bd" width="17" height="17" viewBox="0 0 17 17"><rect x="0.75" y="0.75" width="15.5" height="15.5" rx="3.5" fill="url(#bg1)" stroke="#3a3f48" stroke-width="1.3"/><path d="M1.5 4.5 Q8.5 7 15.5 4.5 V2 Q15 1.4 14 1.4 H3 Q1.5 1.4 1.5 3Z" fill="#fff"/></svg><span class="rt">F17</span></span></div>
<div class="row" style="top:870px"><span class="rbg" style="padding-right:9.9px"><svg class="eye" width="17" height="11" viewBox="0 0 17 11"><path d="M0.5 5.5 Q8.5 -3 16.5 5.5 Q8.5 14 0.5 5.5Z" fill="#9a9a9a"/><circle cx="8.5" cy="5.5" r="3" fill="#f2f2f2"/><circle cx="8.5" cy="5.5" r="1.8" fill="#9a9a9a"/></svg><svg class="bd" width="17" height="17" viewBox="0 0 17 17"><rect x="0.75" y="0.75" width="15.5" height="15.5" rx="3.5" fill="url(#bg1)" stroke="#3a3f48" stroke-width="1.3"/><path d="M1.5 4.5 Q8.5 7 15.5 4.5 V2 Q15 1.4 14 1.4 H3 Q1.5 1.4 1.5 3Z" fill="#fff"/></svg><span class="rt">F16</span></span></div>
<div class="row" style="top:894px"><span class="rbg" style="padding-right:9.9px"><svg class="eye" width="17" height="11" viewBox="0 0 17 11"><path d="M0.5 5.5 Q8.5 -3 16.5 5.5 Q8.5 14 0.5 5.5Z" fill="#9a9a9a"/><circle cx="8.5" cy="5.5" r="3" fill="#f2f2f2"/><circle cx="8.5" cy="5.5" r="1.8" fill="#9a9a9a"/></svg><svg class="bd" width="17" height="17" viewBox="0 0 17 17"><rect x="0.75" y="0.75" width="15.5" height="15.5" rx="3.5" fill="url(#bg1)" stroke="#3a3f48" stroke-width="1.3"/><path d="M1.5 4.5 Q8.5 7 15.5 4.5 V2 Q15 1.4 14 1.4 H3 Q1.5 1.4 1.5 3Z" fill="#fff"/></svg><span class="rt">F15</span></span></div>
<div class="row" style="top:918px"><span class="rbg" style="padding-right:9.9px"><svg class="eye" width="17" height="11" viewBox="0 0 17 11"><path d="M0.5 5.5 Q8.5 -3 16.5 5.5 Q8.5 14 0.5 5.5Z" fill="#9a9a9a"/><circle cx="8.5" cy="5.5" r="3" fill="#f2f2f2"/><circle cx="8.5" cy="5.5" r="1.8" fill="#9a9a9a"/></svg><svg class="bd" width="17" height="17" viewBox="0 0 17 17"><rect x="0.75" y="0.75" width="15.5" height="15.5" rx="3.5" fill="url(#bg1)" stroke="#3a3f48" stroke-width="1.3"/><path d="M1.5 4.5 Q8.5 7 15.5 4.5 V2 Q15 1.4 14 1.4 H3 Q1.5 1.4 1.5 3Z" fill="#fff"/></svg><span class="rt">F14</span></span></div>
<div class="row" style="top:942px"><span class="rbg" style="padding-right:9.9px"><svg class="eye" width="17" height="11" viewBox="0 0 17 11"><path d="M0.5 5.5 Q8.5 -3 16.5 5.5 Q8.5 14 0.5 5.5Z" fill="#9a9a9a"/><circle cx="8.5" cy="5.5" r="3" fill="#f2f2f2"/><circle cx="8.5" cy="5.5" r="1.8" fill="#9a9a9a"/></svg><svg class="bd" width="17" height="17" viewBox="0 0 17 17"><rect x="0.75" y="0.75" width="15.5" height="15.5" rx="3.5" fill="url(#bg1)" stroke="#3a3f48" stroke-width="1.3"/><path d="M1.5 4.5 Q8.5 7 15.5 4.5 V2 Q15 1.4 14 1.4 H3 Q1.5 1.4 1.5 3Z" fill="#fff"/></svg><span class="rt">F13</span></span></div>
<div class="row" style="top:966px"><span class="rbg" style="padding-right:9.9px"><svg class="eye" width="17" height="11" viewBox="0 0 17 11"><path d="M0.5 5.5 Q8.5 -3 16.5 5.5 Q8.5 14 0.5 5.5Z" fill="#9a9a9a"/><circle cx="8.5" cy="5.5" r="3" fill="#f2f2f2"/><circle cx="8.5" cy="5.5" r="1.8" fill="#9a9a9a"/></svg><svg class="bd" width="17" height="17" viewBox="0 0 17 17"><rect x="0.75" y="0.75" width="15.5" height="15.5" rx="3.5" fill="url(#bg1)" stroke="#3a3f48" stroke-width="1.3"/><path d="M1.5 4.5 Q8.5 7 15.5 4.5 V2 Q15 1.4 14 1.4 H3 Q1.5 1.4 1.5 3Z" fill="#fff"/></svg><span class="rt">F12</span></span></div>
<div class="row" style="top:990px"><span class="rbg" style="padding-right:9.9px"><svg class="eye" width="17" height="11" viewBox="0 0 17 11"><path d="M0.5 5.5 Q8.5 -3 16.5 5.5 Q8.5 14 0.5 5.5Z" fill="#9a9a9a"/><circle cx="8.5" cy="5.5" r="3" fill="#f2f2f2"/><circle cx="8.5" cy="5.5" r="1.8" fill="#9a9a9a"/></svg><svg class="bd" width="17" height="17" viewBox="0 0 17 17"><rect x="0.75" y="0.75" width="15.5" height="15.5" rx="3.5" fill="url(#bg1)" stroke="#3a3f48" stroke-width="1.3"/><path d="M1.5 4.5 Q8.5 7 15.5 4.5 V2 Q15 1.4 14 1.4 H3 Q1.5 1.4 1.5 3Z" fill="#fff"/></svg><span class="rt">F11</span></span></div>
<div class="row" style="top:1014px"><span class="rbg" style="padding-right:9.9px"><svg class="eye" width="17" height="11" viewBox="0 0 17 11"><path d="M0.5 5.5 Q8.5 -3 16.5 5.5 Q8.5 14 0.5 5.5Z" fill="#9a9a9a"/><circle cx="8.5" cy="5.5" r="3" fill="#f2f2f2"/><circle cx="8.5" cy="5.5" r="1.8" fill="#9a9a9a"/></svg><svg class="bd" width="17" height="17" viewBox="0 0 17 17"><rect x="0.75" y="0.75" width="15.5" height="15.5" rx="3.5" fill="url(#bg1)" stroke="#3a3f48" stroke-width="1.3"/><path d="M1.5 4.5 Q8.5 7 15.5 4.5 V2 Q15 1.4 14 1.4 H3 Q1.5 1.4 1.5 3Z" fill="#fff"/></svg><span class="rt">F10</span></span></div>
<div class="row" style="top:1038px"><span class="rbg" style="padding-right:9.6px"><svg class="eye" width="17" height="11" viewBox="0 0 17 11"><path d="M0.5 5.5 Q8.5 -3 16.5 5.5 Q8.5 14 0.5 5.5Z" fill="#9a9a9a"/><circle cx="8.5" cy="5.5" r="3" fill="#f2f2f2"/><circle cx="8.5" cy="5.5" r="1.8" fill="#9a9a9a"/></svg><svg class="bd" width="17" height="17" viewBox="0 0 17 17"><rect x="0.75" y="0.75" width="15.5" height="15.5" rx="3.5" fill="url(#bg1)" stroke="#3a3f48" stroke-width="1.3"/><path d="M1.5 4.5 Q8.5 7 15.5 4.5 V2 Q15 1.4 14 1.4 H3 Q1.5 1.4 1.5 3Z" fill="#fff"/></svg><span class="rt">F9</span></span></div>
<div class="row" style="top:1062px"><span class="rbg" style="padding-right:9.6px"><svg class="eye" width="17" height="11" viewBox="0 0 17 11"><path d="M0.5 5.5 Q8.5 -3 16.5 5.5 Q8.5 14 0.5 5.5Z" fill="#9a9a9a"/><circle cx="8.5" cy="5.5" r="3" fill="#f2f2f2"/><circle cx="8.5" cy="5.5" r="1.8" fill="#9a9a9a"/></svg><svg class="bd" width="17" height="17" viewBox="0 0 17 17"><rect x="0.75" y="0.75" width="15.5" height="15.5" rx="3.5" fill="url(#bg1)" stroke="#3a3f48" stroke-width="1.3"/><path d="M1.5 4.5 Q8.5 7 15.5 4.5 V2 Q15 1.4 14 1.4 H3 Q1.5 1.4 1.5 3Z" fill="#fff"/></svg><span class="rt">F8</span></span></div>
<div class="row" style="top:1086px"><span class="rbg" style="padding-right:9.6px"><svg class="eye" width="17" height="11" viewBox="0 0 17 11"><path d="M0.5 5.5 Q8.5 -3 16.5 5.5 Q8.5 14 0.5 5.5Z" fill="#9a9a9a"/><circle cx="8.5" cy="5.5" r="3" fill="#f2f2f2"/><circle cx="8.5" cy="5.5" r="1.8" fill="#9a9a9a"/></svg><svg class="bd" width="17" height="17" viewBox="0 0 17 17"><rect x="0.75" y="0.75" width="15.5" height="15.5" rx="3.5" fill="url(#bg1)" stroke="#3a3f48" stroke-width="1.3"/><path d="M1.5 4.5 Q8.5 7 15.5 4.5 V2 Q15 1.4 14 1.4 H3 Q1.5 1.4 1.5 3Z" fill="#fff"/></svg><span class="rt">F7</span></span></div>
<div class="row" style="top:1110px"><span class="rbg" style="padding-right:9.6px"><svg class="eye" width="17" height="11" viewBox="0 0 17 11"><path d="M0.5 5.5 Q8.5 -3 16.5 5.5 Q8.5 14 0.5 5.5Z" fill="#9a9a9a"/><circle cx="8.5" cy="5.5" r="3" fill="#f2f2f2"/><circle cx="8.5" cy="5.5" r="1.8" fill="#9a9a9a"/></svg><svg class="bd" width="17" height="17" viewBox="0 0 17 17"><rect x="0.75" y="0.75" width="15.5" height="15.5" rx="3.5" fill="url(#bg1)" stroke="#3a3f48" stroke-width="1.3"/><path d="M1.5 4.5 Q8.5 7 15.5 4.5 V2 Q15 1.4 14 1.4 H3 Q1.5 1.4 1.5 3Z" fill="#fff"/></svg><span class="rt">F6</span></span></div>
<div class="row" style="top:1134px"><span class="rbg" style="padding-right:9.6px"><svg class="eye" width="17" height="11" viewBox="0 0 17 11"><path d="M0.5 5.5 Q8.5 -3 16.5 5.5 Q8.5 14 0.5 5.5Z" fill="#9a9a9a"/><circle cx="8.5" cy="5.5" r="3" fill="#f2f2f2"/><circle cx="8.5" cy="5.5" r="1.8" fill="#9a9a9a"/></svg><svg class="bd" width="17" height="17" viewBox="0 0 17 17"><rect x="0.75" y="0.75" width="15.5" height="15.5" rx="3.5" fill="url(#bg1)" stroke="#3a3f48" stroke-width="1.3"/><path d="M1.5 4.5 Q8.5 7 15.5 4.5 V2 Q15 1.4 14 1.4 H3 Q1.5 1.4 1.5 3Z" fill="#fff"/></svg><span class="rt">F5</span></span></div>
<div class="row" style="top:1158px"><span class="rbg" style="padding-right:9.6px"><svg class="eye" width="17" height="11" viewBox="0 0 17 11"><path d="M0.5 5.5 Q8.5 -3 16.5 5.5 Q8.5 14 0.5 5.5Z" fill="#9a9a9a"/><circle cx="8.5" cy="5.5" r="3" fill="#f2f2f2"/><circle cx="8.5" cy="5.5" r="1.8" fill="#9a9a9a"/></svg><svg class="bd" width="17" height="17" viewBox="0 0 17 17"><rect x="0.75" y="0.75" width="15.5" height="15.5" rx="3.5" fill="url(#bg1)" stroke="#3a3f48" stroke-width="1.3"/><path d="M1.5 4.5 Q8.5 7 15.5 4.5 V2 Q15 1.4 14 1.4 H3 Q1.5 1.4 1.5 3Z" fill="#fff"/></svg><span class="rt">F4</span></span></div>
<div class="row" style="top:1182px"><span class="rbg" style="padding-right:9.6px"><svg class="eye" width="17" height="11" viewBox="0 0 17 11"><path d="M0.5 5.5 Q8.5 -3 16.5 5.5 Q8.5 14 0.5 5.5Z" fill="#9a9a9a"/><circle cx="8.5" cy="5.5" r="3" fill="#f2f2f2"/><circle cx="8.5" cy="5.5" r="1.8" fill="#9a9a9a"/></svg><svg class="bd" width="17" height="17" viewBox="0 0 17 17"><rect x="0.75" y="0.75" width="15.5" height="15.5" rx="3.5" fill="url(#bg1)" stroke="#3a3f48" stroke-width="1.3"/><path d="M1.5 4.5 Q8.5 7 15.5 4.5 V2 Q15 1.4 14 1.4 H3 Q1.5 1.4 1.5 3Z" fill="#fff"/></svg><span class="rt">F3</span></span></div>
<div class="row" style="top:1206px"><span class="rbg" style="padding-right:9.6px"><svg class="eye" width="17" height="11" viewBox="0 0 17 11"><path d="M0.5 5.5 Q8.5 -3 16.5 5.5 Q8.5 14 0.5 5.5Z" fill="#9a9a9a"/><circle cx="8.5" cy="5.5" r="3" fill="#f2f2f2"/><circle cx="8.5" cy="5.5" r="1.8" fill="#9a9a9a"/></svg><svg class="bd" width="17" height="17" viewBox="0 0 17 17"><rect x="0.75" y="0.75" width="15.5" height="15.5" rx="3.5" fill="url(#bg1)" stroke="#3a3f48" stroke-width="1.3"/><path d="M1.5 4.5 Q8.5 7 15.5 4.5 V2 Q15 1.4 14 1.4 H3 Q1.5 1.4 1.5 3Z" fill="#fff"/></svg><span class="rt">F2</span></span></div>
<div class="row" style="top:1230px"><span class="rbg" style="padding-right:9.6px"><svg class="eye" width="17" height="11" viewBox="0 0 17 11"><path d="M0.5 5.5 Q8.5 -3 16.5 5.5 Q8.5 14 0.5 5.5Z" fill="#9a9a9a"/><circle cx="8.5" cy="5.5" r="3" fill="#f2f2f2"/><circle cx="8.5" cy="5.5" r="1.8" fill="#9a9a9a"/></svg><svg class="bd" width="17" height="17" viewBox="0 0 17 17"><rect x="0.75" y="0.75" width="15.5" height="15.5" rx="3.5" fill="url(#bg1)" stroke="#3a3f48" stroke-width="1.3"/><path d="M1.5 4.5 Q8.5 7 15.5 4.5 V2 Q15 1.4 14 1.4 H3 Q1.5 1.4 1.5 3Z" fill="#fff"/></svg><span class="rt">F1</span></span></div>
<div class="row" style="top:1254px"><span class="rbg" style="padding-right:10.7px"><svg class="eye" width="17" height="11" viewBox="0 0 17 11"><path d="M0.5 5.5 Q8.5 -3 16.5 5.5 Q8.5 14 0.5 5.5Z" fill="#9a9a9a"/><circle cx="8.5" cy="5.5" r="3" fill="#f2f2f2"/><circle cx="8.5" cy="5.5" r="1.8" fill="#9a9a9a"/></svg><svg class="bd" width="17" height="17" viewBox="0 0 17 17"><rect x="0.75" y="0.75" width="15.5" height="15.5" rx="3.5" fill="url(#bg1)" stroke="#3a3f48" stroke-width="1.3"/><path d="M1.5 4.5 Q8.5 7 15.5 4.5 V2 Q15 1.4 14 1.4 H3 Q1.5 1.4 1.5 3Z" fill="#fff"/></svg><span class="rt">Saddle</span></span></div>
<div class="panelhdr" style="top:1285px"><span>COMMENTAIRES</span><svg class="abs" style="left:278px;top:6px" width="11" height="11" viewBox="0 0 11 11"><circle cx="5.5" cy="5.5" r="5.2" fill="#222"/><rect x="2.5" y="4.6" width="6" height="1.8" fill="#fff"/><rect x="4.6" y="2.5" width="1.8" height="6" fill="#fff"/></svg></div>
<div id="tl"></div>
<svg class="abs" style="left:0;top:1308px" width="1929" height="49" viewBox="0 1308 1929 49">
<defs>
<symbol id="t_sk" viewBox="0 0 16 16" width="16" height="16"><rect x="0.5" y="0.5" width="13" height="13" fill="#f8f8f8" stroke="#aaa" stroke-width="0.8"/><path d="M3.5 4 H10 M3.5 4 V10.5 M3.5 10.5 Q9.5 10 10 4" stroke="#666" stroke-width="0.8" fill="none"/><rect x="0" y="0" width="1.8" height="1.8" fill="#1a8ae0"/><rect x="12.5" y="0" width="1.8" height="1.8" fill="#1a8ae0"/><rect x="0" y="12.5" width="1.8" height="1.8" fill="#1a8ae0"/><rect x="2.6" y="3" width="1.8" height="1.8" fill="#1a8ae0"/><rect x="9.3" y="3" width="1.8" height="1.8" fill="#1a8ae0"/><rect x="2.6" y="9.7" width="1.8" height="1.8" fill="#1a8ae0"/><path d="M9 15 L14 9.5 L16 11 L11 16.5Z" fill="#f0b030"/><path d="M14 9.5 L15.5 8 L17 9.5 L16 11Z" fill="#e82a2a"/><path d="M9 15 L8.3 16.6 L10 16Z" fill="#444"/></symbol>
<symbol id="t_ex" viewBox="0 0 16 16" width="16" height="16"><path d="M0 3 L3 0 H12 L9 3Z" fill="#8ccbf5"/><rect x="0" y="3" width="9" height="10" fill="#69afe5"/><path d="M9 3 L12 0 V10 L9 13Z" fill="#4a92cc"/><path d="M0 13 H9 L12 10 V12 L9 15.5 H0Z" fill="#c4c4c4"/><path d="M14 14 V1" stroke="#222" stroke-width="0.9"/><path d="M12.8 3 L14 0 L15.2 3Z" fill="#222"/></symbol>
<symbol id="t_sp" viewBox="0 0 16 16" width="16" height="16"><path d="M1 3 L4 0 H15 L12 3Z" fill="#8ccbf5"/><rect x="1" y="3" width="11" height="5" fill="#69afe5"/><path d="M12 3 L15 0 V5 L12 8Z" fill="#4a92cc"/><path d="M0 9.5 H12 L16 6" stroke="#3a9ae0" stroke-width="0.9" fill="none"/><rect x="1.5" y="10.5" width="10.5" height="5" fill="#dcdcdc" stroke="#777" stroke-width="0.7"/><path d="M12 10.5 L15 7.5 V12.5 L12 15.5Z" fill="#bdbdbd" stroke="#777" stroke-width="0.7"/></symbol>
<symbol id="t_jo" viewBox="0 0 16 16" width="16" height="16"><circle cx="11" cy="8" r="4.6" fill="#8fb3e0" stroke="#3a4a6a" stroke-width="0.9"/><path d="M0.5 8 L4 5 V11Z" fill="#111"/><path d="M3 8 H7" stroke="#111" stroke-width="1.6"/></symbol>
<symbol id="t_fi" viewBox="0 0 16 16" width="16" height="16"><path d="M0.5 15.5 V7 L7 0.5 H12 L15.5 4 V15.5Z" fill="#dcdcdc" stroke="#777" stroke-width="0.8"/><path d="M1.5 7 L7.5 1.5 L11 4.5 L5 10Z" fill="#69afe5"/></symbol>
<symbol id="t_mv" viewBox="0 0 16 16" width="16" height="16"><path d="M8 2.5 V13.5 M2.5 8 H13.5" stroke="#222" stroke-width="1.3"/><path d="M8 0 L10.5 3.5 H5.5Z M8 16 L10.5 12.5 H5.5Z M0 8 L3.5 5.5 V10.5Z M16 8 L12.5 5.5 V10.5Z" fill="#222"/></symbol>
<symbol id="t_tc" viewBox="0 0 16 16" width="16" height="16"><path d="M5 3 L8 0 H16 L13 3Z" fill="#8ccbf5"/><rect x="5" y="3" width="8" height="8" fill="#69afe5"/><path d="M13 3 L16 0 V8 L13 11Z" fill="#4a92cc"/><path d="M0 8 L3 5 H5 V8Z" fill="#8ccbf5"/><rect x="0" y="8" width="9" height="8" fill="#69afe5"/><path d="M9 11 H13 L9 16Z" fill="#4a92cc"/></symbol>
<symbol id="t_lo" viewBox="0 0 18 16" width="18" height="16"><path d="M1 5 Q9 0 17 5" stroke="#222" stroke-width="0.8" fill="none"/><path d="M1 6 L3 4.5 L3.5 7Z" fill="#222"/><path d="M0.5 9 Q9 4 16.5 9 V13 Q9 9 0.5 14Z" fill="#8ccbf5"/><path d="M0.5 14 Q9 9 16.5 13 V15 Q9 11 0.5 16Z" fill="#4a92cc"/><rect x="14" y="9" width="3" height="5" fill="#fff" stroke="#777" stroke-width="0.6"/></symbol>
</defs>
<path d="M11 1336.5 H13 V1349.5 H11Z M13 1343 L22 1336.5 V1349.5Z" fill="#555"/>
<path d="M35.5 1343 L46 1336.5 V1349.5Z M46.5 1340 H48 V1346 H46.5Z" fill="#555"/>
<path d="M61 1335.5 L73 1343 L61 1350.5Z" fill="#555"/>
<path d="M85 1340 H86.5 V1346 H85Z M88 1336.5 L97.7 1343 L88 1349.5Z" fill="#555"/>
<path d="M111 1336.5 L120 1343 L111 1349.5Z M120.5 1336.5 H122 V1349.5 H120.5Z" fill="#555"/>
<rect x="154" y="1354" width="1775" height="1.4" fill="#c4c4c4"/>
<rect x="154.0" y="1349.5" width="1.4" height="5" fill="#c4c4c4"/>
<use href="#t_sk" x="146" y="1330"/>
<rect x="178.0" y="1349.5" width="1.4" height="5" fill="#c4c4c4"/>
<use href="#t_sk" x="170" y="1330"/>
<rect x="202.0" y="1349.5" width="1.4" height="5" fill="#c4c4c4"/>
<use href="#t_sk" x="194" y="1330"/>
<rect x="226.0" y="1349.5" width="1.4" height="5" fill="#c4c4c4"/>
<use href="#t_sk" x="218" y="1330"/>
<rect x="250.0" y="1349.5" width="1.4" height="5" fill="#c4c4c4"/>
<use href="#t_sk" x="242" y="1330"/>
<rect x="262" y="1326" width="24" height="23.5" rx="2" fill="#e3e31c"/>
<rect x="274.0" y="1349.5" width="1.4" height="5" fill="#c4c4c4"/>
<use href="#t_sk" x="266" y="1330"/>
<rect x="298.0" y="1349.5" width="1.4" height="5" fill="#c4c4c4"/>
<use href="#t_sk" x="290" y="1330"/>
<rect x="322.0" y="1349.5" width="1.4" height="5" fill="#c4c4c4"/>
<use href="#t_ex" x="314" y="1330"/>
<rect x="334" y="1326" width="24" height="23.5" rx="2" fill="#e3e31c"/>
<rect x="346.0" y="1349.5" width="1.4" height="5" fill="#c4c4c4"/>
<use href="#t_ex" x="338" y="1330"/>
<rect x="370.0" y="1349.5" width="1.4" height="5" fill="#c4c4c4"/>
<use href="#t_sk" x="362" y="1330"/>
<rect x="394.0" y="1349.5" width="1.4" height="5" fill="#c4c4c4"/>
<use href="#t_sk" x="386" y="1330"/>
<rect x="418.0" y="1349.5" width="1.4" height="5" fill="#c4c4c4"/>
<use href="#t_sk" x="410" y="1330"/>
<rect x="442.0" y="1349.5" width="1.4" height="5" fill="#c4c4c4"/>
<use href="#t_sk" x="434" y="1330"/>
<rect x="466.0" y="1349.5" width="1.4" height="5" fill="#c4c4c4"/>
<use href="#t_fi" x="458" y="1330"/>
<rect x="490.0" y="1349.5" width="1.4" height="5" fill="#c4c4c4"/>
<use href="#t_mv" x="482" y="1330"/>
<rect x="502" y="1326" width="24" height="23.5" rx="2" fill="#e3e31c"/>
<rect x="514.0" y="1349.5" width="1.4" height="5" fill="#c4c4c4"/>
<use href="#t_lo" x="505" y="1330"/>
<rect x="526" y="1326" width="24" height="23.5" rx="2" fill="#e3e31c"/>
<rect x="538.0" y="1349.5" width="1.4" height="5" fill="#c4c4c4"/>
<use href="#t_lo" x="529" y="1330"/>
<rect x="562.0" y="1349.5" width="1.4" height="5" fill="#c4c4c4"/>
<use href="#t_ex" x="554" y="1330"/>
<rect x="586.0" y="1349.5" width="1.4" height="5" fill="#c4c4c4"/>
<use href="#t_ex" x="578" y="1330"/>
<rect x="610.0" y="1349.5" width="1.4" height="5" fill="#c4c4c4"/>
<use href="#t_ex" x="602" y="1330"/>
<rect x="634.0" y="1349.5" width="1.4" height="5" fill="#c4c4c4"/>
<use href="#t_ex" x="626" y="1330"/>
<rect x="658.0" y="1349.5" width="1.4" height="5" fill="#c4c4c4"/>
<use href="#t_ex" x="650" y="1330"/>
<rect x="682.0" y="1349.5" width="1.4" height="5" fill="#c4c4c4"/>
<use href="#t_ex" x="674" y="1330"/>
<rect x="706.0" y="1349.5" width="1.4" height="5" fill="#c4c4c4"/>
<use href="#t_sk" x="698" y="1330"/>
<rect x="730.0" y="1349.5" width="1.4" height="5" fill="#c4c4c4"/>
<use href="#t_sp" x="722" y="1330"/>
<rect x="754.0" y="1349.5" width="1.4" height="5" fill="#c4c4c4"/>
<use href="#t_sp" x="746" y="1330"/>
<rect x="778.0" y="1349.5" width="1.4" height="5" fill="#c4c4c4"/>
<use href="#t_sp" x="770" y="1330"/>
<rect x="802.0" y="1349.5" width="1.4" height="5" fill="#c4c4c4"/>
<use href="#t_sp" x="794" y="1330"/>
<rect x="826.0" y="1349.5" width="1.4" height="5" fill="#c4c4c4"/>
<use href="#t_sp" x="818" y="1330"/>
<rect x="850.0" y="1349.5" width="1.4" height="5" fill="#c4c4c4"/>
<use href="#t_sp" x="842" y="1330"/>
<rect x="874.0" y="1349.5" width="1.4" height="5" fill="#c4c4c4"/>
<use href="#t_sp" x="866" y="1330"/>
<rect x="898.0" y="1349.5" width="1.4" height="5" fill="#c4c4c4"/>
<use href="#t_sp" x="890" y="1330"/>
<rect x="922.0" y="1349.5" width="1.4" height="5" fill="#c4c4c4"/>
<use href="#t_sp" x="914" y="1330"/>
<rect x="946.0" y="1349.5" width="1.4" height="5" fill="#c4c4c4"/>
<use href="#t_jo" x="938" y="1330"/>
<rect x="970.0" y="1349.5" width="1.4" height="5" fill="#c4c4c4"/>
<use href="#t_jo" x="962" y="1330"/>
<rect x="994.0" y="1349.5" width="1.4" height="5" fill="#c4c4c4"/>
<use href="#t_jo" x="986" y="1330"/>
<rect x="1018.0" y="1349.5" width="1.4" height="5" fill="#c4c4c4"/>
<use href="#t_jo" x="1010" y="1330"/>
<rect x="1042.0" y="1349.5" width="1.4" height="5" fill="#c4c4c4"/>
<use href="#t_jo" x="1034" y="1330"/>
<rect x="1066.0" y="1349.5" width="1.4" height="5" fill="#c4c4c4"/>
<use href="#t_jo" x="1058" y="1330"/>
<rect x="1090.0" y="1349.5" width="1.4" height="5" fill="#c4c4c4"/>
<use href="#t_jo" x="1082" y="1330"/>
<rect x="1114.0" y="1349.5" width="1.4" height="5" fill="#c4c4c4"/>
<use href="#t_jo" x="1106" y="1330"/>
<rect x="1138.0" y="1349.5" width="1.4" height="5" fill="#c4c4c4"/>
<use href="#t_jo" x="1130" y="1330"/>
<rect x="1162.0" y="1349.5" width="1.4" height="5" fill="#c4c4c4"/>
<use href="#t_fi" x="1154" y="1330"/>
<rect x="1186.0" y="1349.5" width="1.4" height="5" fill="#c4c4c4"/>
<use href="#t_fi" x="1178" y="1330"/>
<rect x="1210.0" y="1349.5" width="1.4" height="5" fill="#c4c4c4"/>
<use href="#t_fi" x="1202" y="1330"/>
<rect x="1234.0" y="1349.5" width="1.4" height="5" fill="#c4c4c4"/>
<use href="#t_fi" x="1226" y="1330"/>
<rect x="1258.0" y="1349.5" width="1.4" height="5" fill="#c4c4c4"/>
<use href="#t_fi" x="1250" y="1330"/>
<rect x="1282.0" y="1349.5" width="1.4" height="5" fill="#c4c4c4"/>
<use href="#t_jo" x="1274" y="1330"/>
<rect x="1306.0" y="1349.5" width="1.4" height="5" fill="#c4c4c4"/>
<use href="#t_ex" x="1298" y="1330"/>
<rect x="1330.0" y="1349.5" width="1.4" height="5" fill="#c4c4c4"/>
<use href="#t_ex" x="1322" y="1330"/>
<rect x="1354.0" y="1349.5" width="1.4" height="5" fill="#c4c4c4"/>
<use href="#t_sp" x="1346" y="1330"/>
<rect x="1378.0" y="1349.5" width="1.4" height="5" fill="#c4c4c4"/>
<use href="#t_sp" x="1370" y="1330"/>
<rect x="1402.0" y="1349.5" width="1.4" height="5" fill="#c4c4c4"/>
<use href="#t_sp" x="1394" y="1330"/>
<rect x="1426.0" y="1349.5" width="1.4" height="5" fill="#c4c4c4"/>
<use href="#t_sp" x="1418" y="1330"/>
<rect x="1450.0" y="1349.5" width="1.4" height="5" fill="#c4c4c4"/>
<use href="#t_jo" x="1442" y="1330"/>
<rect x="1474.0" y="1349.5" width="1.4" height="5" fill="#c4c4c4"/>
<use href="#t_jo" x="1466" y="1330"/>
<rect x="1498.0" y="1349.5" width="1.4" height="5" fill="#c4c4c4"/>
<use href="#t_jo" x="1490" y="1330"/>
<rect x="1522.0" y="1349.5" width="1.4" height="5" fill="#c4c4c4"/>
<use href="#t_jo" x="1514" y="1330"/>
<rect x="1546.0" y="1349.5" width="1.4" height="5" fill="#c4c4c4"/>
<use href="#t_tc" x="1538" y="1330"/>
<rect x="1570.0" y="1349.5" width="1.4" height="5" fill="#c4c4c4"/>
<use href="#t_ex" x="1562" y="1330"/>
<rect x="1594.0" y="1349.5" width="1.4" height="5" fill="#c4c4c4"/>
<use href="#t_sp" x="1586" y="1330"/>
<rect x="1618.0" y="1349.5" width="1.4" height="5" fill="#c4c4c4"/>
<use href="#t_sp" x="1610" y="1330"/>
<rect x="1642.0" y="1349.5" width="1.4" height="5" fill="#c4c4c4"/>
<use href="#t_jo" x="1634" y="1330"/>
<rect x="1666.0" y="1349.5" width="1.4" height="5" fill="#c4c4c4"/>
<use href="#t_jo" x="1658" y="1330"/>
<rect x="1690.0" y="1349.5" width="1.4" height="5" fill="#c4c4c4"/>
<use href="#t_ex" x="1682" y="1330"/>
<rect x="1714.0" y="1349.5" width="1.4" height="5" fill="#c4c4c4"/>
<use href="#t_sp" x="1706" y="1330"/>
<rect x="1738.0" y="1349.5" width="1.4" height="5" fill="#c4c4c4"/>
<use href="#t_jo" x="1730" y="1330"/>
<rect x="1762.0" y="1349.5" width="1.4" height="5" fill="#c4c4c4"/>
<use href="#t_jo" x="1754" y="1330"/>
<rect x="1786.0" y="1349.5" width="1.4" height="5" fill="#c4c4c4"/>
<use href="#t_tc" x="1778" y="1330"/>
<rect x="1810.0" y="1349.5" width="1.4" height="5" fill="#c4c4c4"/>
<use href="#t_ex" x="1802" y="1330"/>
<rect x="1834.0" y="1349.5" width="1.4" height="5" fill="#c4c4c4"/>
<use href="#t_sp" x="1826" y="1330"/>
<rect x="1858.0" y="1349.5" width="1.4" height="5" fill="#c4c4c4"/>
<use href="#t_sp" x="1850" y="1330"/>
<rect x="1882.0" y="1349.5" width="1.4" height="5" fill="#c4c4c4"/>
<use href="#t_jo" x="1874" y="1330"/>
<rect x="1906.0" y="1349.5" width="1.4" height="5" fill="#c4c4c4"/>
<use href="#t_jo" x="1898" y="1330"/>
<rect x="1930.0" y="1349.5" width="1.4" height="5" fill="#c4c4c4"/>
<use href="#t_ex" x="1922" y="1330"/>
</svg>
<div class="abs" style="left:4px;top:1315px;width:59px;height:6px;background:#c6c6c6;border-radius:3px"></div>
</body></html>
